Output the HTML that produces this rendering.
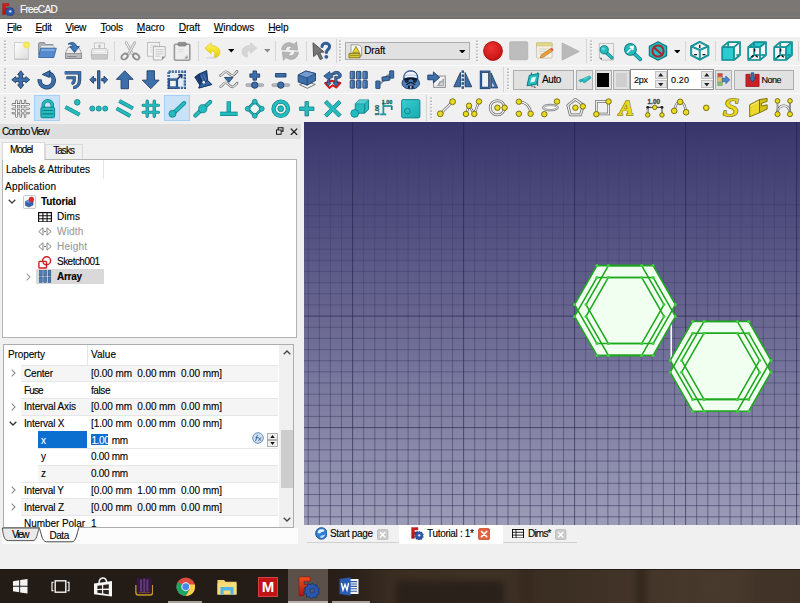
<!DOCTYPE html>
<html>
<head>
<meta charset="utf-8">
<title>FreeCAD</title>
<style>
html,body{margin:0;padding:0;}
body{width:800px;height:603px;overflow:hidden;position:relative;background:#f0f0f0;font-family:"Liberation Sans",sans-serif;font-size:10px;color:#000;}
.abs{position:absolute;}
.tx{font-size:9.2px;line-height:12px;white-space:nowrap;letter-spacing:-0.05px;-webkit-text-stroke:0.12px currentColor;}
#titlebar{left:0;top:0;width:800px;height:18.6px;background:linear-gradient(#7b7775 0,#7b7775 62%,#777573 66%,#777573 84%,#7c7a79 88%,#6d6a69 100%);}
#menubar{left:0;top:18.5px;width:800px;height:18.5px;background:#fff;}
#menubar span{position:absolute;top:3.6px;font-size:10.2px;line-height:12px;letter-spacing:-0.2px}
#tb{left:0;top:37px;width:800px;height:85px;background:#f0f0f0;}
.ic{position:absolute;overflow:visible}
.hl{position:absolute;background:#c9e2f8;border:1px solid #a6d0f5;box-sizing:border-box;}
.sep{position:absolute;width:1px;background:#d6d6d6;}
.hd{position:absolute;width:3px;background:radial-gradient(circle at 1px 1px,#9f9f9f 0.45px,rgba(160,160,160,0) 0.95px) 0 0/3px 3.25px repeat-y,radial-gradient(circle at 2px 2px,#fff 0.45px,rgba(255,255,255,0) 0.95px) 0 0/3px 3.25px repeat-y;}
.btn{position:absolute;box-sizing:border-box;border:1px solid #adadad;background:#e1e1e1;}
.spin{position:absolute;box-sizing:border-box;border:1px solid #8a8a8a;background:#fff;}
#combo{left:0;top:122px;width:304px;height:447px;background:#f0f0f0;}
#view3d{left:304.4px;top:122px;width:495.6px;height:403px;overflow:hidden;background:linear-gradient(#38356c 0%,#9c9cb8 100%);}
#mditabs{left:304px;top:525px;width:496px;height:44px;background:#f0f0f0;}
#taskbar{left:0;top:569px;width:800px;height:34px;background:#34281e;overflow:hidden;}
</style>
</head>
<body>
<div id="titlebar" class="abs">
<svg class="abs" style="left:1.5px;top:3.2px;width:13px;height:13px" viewBox="0 0 24 24"><defs><linearGradient id="fga" x1="0" y1="0" x2="0" y2="1"><stop offset="0" stop-color="#d42020"/><stop offset="1" stop-color="#b01414"/></linearGradient></defs><path d="M1 1 H13 V5.5 H6.4 V9 H11 V13.5 H6.4 V21 H1Z" fill="url(#fga)" stroke="#8e0f0f" stroke-width="0.6"/><g transform="translate(15.2 15.6)"><path d="M0 -8 L2 -5.8 L4.9 -6.4 L5.2 -3.4 L7.9 -2 L6.4 0.6 L7.6 3.4 L4.9 4.6 L4.3 7.6 L1.3 6.9 L-1 9 L-3 6.6 L-6 6.9 L-6.2 3.9 L-8.8 2.2 L-7.2 -0.4 L-8.2 -3.3 L-5.4 -4.4 L-4.6 -7.3 L-1.6 -6.5Z" fill="#2a56ad" stroke="#16336c" stroke-width="0.9"/><circle r="2.6" fill="#dfe6f5" stroke="#16336c" stroke-width="0.6"/></g></svg>
<div class="abs tx" style="left:20.00px;top:3.92px;font-size:10px;letter-spacing:-0.679px;color:#fff;">FreeCAD</div></div>
<div id="menubar" class="abs">
<div class="abs tx" style="left:7.00px;top:3.12px;font-size:10.2px;letter-spacing:-0.479px;"><u>F</u>ile</div><div class="abs tx" style="left:35.40px;top:3.12px;font-size:10.2px;letter-spacing:-0.359px;"><u>E</u>dit</div><div class="abs tx" style="left:65.60px;top:3.12px;font-size:10.2px;letter-spacing:-0.408px;"><u>V</u>iew</div><div class="abs tx" style="left:100.50px;top:3.12px;font-size:10.2px;letter-spacing:-0.328px;"><u>T</u>ools</div><div class="abs tx" style="left:136.80px;top:3.12px;font-size:10.2px;letter-spacing:-0.085px;"><u>M</u>acro</div><div class="abs tx" style="left:178.80px;top:3.12px;font-size:10.2px;letter-spacing:-0.226px;"><u>D</u>raft</div><div class="abs tx" style="left:213.80px;top:3.12px;font-size:10.2px;letter-spacing:-0.113px;"><u>W</u>indows</div><div class="abs tx" style="left:268.20px;top:3.12px;font-size:10.2px;letter-spacing:-0.193px;"><u>H</u>elp</div>
</div>
<div id="tb" class="abs">
<div class="abs" style="left:0;top:27.5px;width:800px;height:1px;background:#fbfbfb"></div>
<div class="abs" style="left:0;top:56px;width:800px;height:1px;background:#fbfbfb"></div>
<div class="hd" style="left:4px;top:3px;height:22px"></div>
<svg class="ic" style="left:10.6px;top:3.3px;width:20px;height:20px" viewBox="0 0 20 20" ><defs><linearGradient id="gnew" x1="0" y1="0" x2="1" y2="1"><stop offset="0" stop-color="#fff"/><stop offset="1" stop-color="#dcdcdc"/></linearGradient>
<radialGradient id="gstar"><stop offset="0" stop-color="#fff27a"/><stop offset=".6" stop-color="#f3e64a"/><stop offset="1" stop-color="#f3e64a" stop-opacity="0"/></radialGradient></defs>
<rect x="3.5" y="2.5" width="14" height="16.5" fill="url(#gnew)" stroke="#cdcdcd" stroke-width="0.9"/><path d="M3.5 19.4 H17.5" stroke="#bdbdbd" stroke-width="0.9"/>
<circle cx="15.5" cy="5" r="4.2" fill="url(#gstar)"/></svg>
<svg class="ic" style="left:36.8px;top:2.7px;width:20px;height:20px" viewBox="0 0 20 20" ><path d="M1.5 3.5 L1.5 15 L16 15 L16 4.5 L8.5 4.5 L7.5 2.5 L2.5 2.5 Z" fill="#a9adb3" stroke="#7f848c" stroke-width="0.8"/>
<path d="M4 5.5 L17 5.5 L16.5 15 L3 15Z" fill="#e8e8e8" stroke="#aaa" stroke-width="0.5"/>
<path d="M3.6 8.2 L19.3 8.2 L16.8 17.5 L1.6 17.5 Z" fill="#558bce" stroke="#3567a6" stroke-width="0.9"/>
<path d="M4.2 9 L18.3 9 L17.8 11 L3.8 11Z" fill="#7fb0e6" opacity=".8"/></svg>
<svg class="ic" style="left:62.8px;top:4.3px;width:20px;height:20px" viewBox="0 0 20 20" ><path d="M2.5 12 L5 6.5 L16 6.5 L18.5 12 L18.5 17.5 L2.5 17.5Z" fill="#ececed" stroke="#9a9ca0" stroke-width="0.9"/>
<rect x="2.5" y="12.5" width="16" height="5" fill="#b9bbbf" stroke="#85878b" stroke-width="0.8"/>
<rect x="4.5" y="15" width="9" height="1.2" fill="#8a8c90"/>
<path d="M5 3.2 C8 0.5 13 1.2 13.5 5.5 L16.3 5.5 L11.5 11.5 L6.8 5.5 L9.6 5.5 C9.5 3.2 7 2.6 5 3.2Z" fill="#3f78bb" stroke="#244f86" stroke-width="0.9"/></svg>
<svg class="ic" style="left:88.6px;top:3.8px;width:20px;height:20px" viewBox="0 0 20 20" ><rect x="5.5" y="2" width="10" height="7" fill="#f3f3f3" stroke="#bdbdbd" stroke-width="0.8"/>
<path d="M10.5 3.2 l2 2.2 h-1.2 v1.6 h-1.6 v-1.6 h-1.2z" fill="#bdbdbd"/>
<path d="M2.4 9.5 C2.4 8.3 3.4 7.6 4.6 7.6 L16.4 7.6 C17.6 7.6 18.6 8.3 18.6 9.5 L18.6 15 L2.4 15Z" fill="#ededed" stroke="#b4b4b4" stroke-width="0.8"/>
<rect x="2.4" y="13.6" width="16.2" height="4.6" rx="0.8" fill="#c9c9c9" stroke="#adadad" stroke-width="0.6"/>
<rect x="4.6" y="9.6" width="11.8" height="1.6" fill="#fafafa" stroke="#cfcfcf" stroke-width="0.4"/></svg>
<div class="sep" style="left:114px;top:4px;height:20px"></div>
<svg class="ic" style="left:120.0px;top:3.8px;width:20px;height:20px" viewBox="0 0 20 20" ><path d="M6.2 1.6 L12.6 13" stroke="#9c9c9c" stroke-width="2.6" stroke-linecap="round"/><path d="M6.2 1.6 L12.6 13" stroke="#ececec" stroke-width="1.4" stroke-linecap="round"/>
<path d="M14.8 1.6 L8.4 13" stroke="#9c9c9c" stroke-width="2.6" stroke-linecap="round"/><path d="M14.8 1.6 L8.4 13" stroke="#e2e2e2" stroke-width="1.4" stroke-linecap="round"/>
<ellipse cx="4.6" cy="15.6" rx="3.4" ry="2.5" fill="none" stroke="#8e8e8e" stroke-width="1.8" transform="rotate(-38 4.6 15.6)"/>
<ellipse cx="16.2" cy="15.6" rx="3.4" ry="2.5" fill="none" stroke="#8e8e8e" stroke-width="1.8" transform="rotate(38 16.2 15.6)"/></svg>
<svg class="ic" style="left:146.0px;top:3.8px;width:20px;height:20px" viewBox="0 0 20 20" ><rect x="1.6" y="1.6" width="12" height="13.6" fill="#f6f6f6" stroke="#b6b6b6" stroke-width="0.9"/>
<path d="M3.6 4.4h8M3.6 6.6h3M3.6 8.8h3M3.6 11h3" stroke="#d4d4d4" stroke-width="0.9"/>
<path d="M7.4 5.6 L19.2 5.6 L19.2 15.4 L15.8 19 L7.4 19Z" fill="#f4f4f4" stroke="#a9a9a9" stroke-width="0.9"/>
<path d="M9.4 8.6h8M9.4 10.8h8M9.4 13h8M9.4 15.2h5" stroke="#c6c6c6" stroke-width="1"/>
<path d="M19.2 15.4 L15.8 19 L15.8 15.4Z" fill="#8f8f8f"/></svg>
<svg class="ic" style="left:172.0px;top:3.8px;width:20px;height:20px" viewBox="0 0 20 20" ><rect x="2.4" y="3.2" width="15.4" height="16" rx="1" fill="#efefef" stroke="#999" stroke-width="1.6"/>
<path d="M15.6 14.4 L12.6 17.4 L15.6 17.4Z" fill="#8c8c8c"/><path d="M15.8 13.4 L11.8 17.6" stroke="#c4c4c4" stroke-width="0.8"/>
<rect x="6" y="1.4" width="8.2" height="3.6" rx="1.2" fill="#8f8f8f" stroke="#777" stroke-width="0.7"/>
<path d="M6 8.6h6M6 10.8h5" stroke="#dcdcdc" stroke-width="1"/></svg>
<div class="sep" style="left:197.5px;top:4px;height:20px"></div>
<svg class="ic" style="left:204.0px;top:4.7px;width:17px;height:17px" viewBox="0 0 20 20" ><defs><linearGradient id="gun" x1="0" y1="0" x2="0" y2="1"><stop offset="0" stop-color="#fbf286"/><stop offset=".5" stop-color="#f4e225"/><stop offset="1" stop-color="#e6cc1c"/></linearGradient></defs>
<ellipse cx="9" cy="18.6" rx="6.5" ry="1.3" fill="#dcdce6"/>
<path d="M1 7.4 L8.4 0.8 L8.4 4.2 C15 4 19.4 8 18.6 13.2 C18.2 16 16 17.8 13.2 18 L11.8 18 C12 16 12.6 15.4 12.6 13.6 C12.6 11.4 11.2 10.6 8.4 10.6 L8.4 14Z" fill="url(#gun)" stroke="#dcc41c" stroke-width="0.8" stroke-linejoin="round"/></svg>
<svg class="abs" style="left:227.7px;top:12.200000000000003px;width:6.6px;height:3.6px" viewBox="0 0 7 4"><path d="M0 0H7L3.5 4Z" fill="#000"/></svg>
<svg class="ic" style="left:241.2px;top:5.0px;width:16.5px;height:16.5px" viewBox="0 0 20 20" ><path d="M19 7.4 L11.6 0.8 L11.6 4.2 C5 4 0.6 8 1.4 13.2 C1.8 16 4 17.8 6.8 18 L8.2 18 C8 16 7.4 15.4 7.4 13.6 C7.4 11.4 8.8 10.6 11.6 10.6 L11.6 14Z" fill="#d6d6d6" stroke="#cbcbcb" stroke-width="0.8" stroke-linejoin="round"/></svg>
<svg class="abs" style="left:263.7px;top:12.200000000000003px;width:6.6px;height:3.6px" viewBox="0 0 7 4"><path d="M0 0H7L3.5 4Z" fill="#8a8a8a"/></svg>
<div class="sep" style="left:274.5px;top:4px;height:20px"></div>
<svg class="ic" style="left:280.0px;top:3.8px;width:20px;height:20px" viewBox="0 0 20 20" ><g transform="translate(10 10) scale(1.18) translate(-10 -10)"><path d="M3 9 C3 4.5 7 2.2 11 3.2 L13.5 4.4 L15.5 2.2 L16.5 9.2 L9.6 8.6 L11.7 6.4 C9 5.2 6.2 6.4 6.2 9Z" fill="#b5b5b5" stroke="#a2a2a2" stroke-width="0.6"/>
<path d="M17 11 C17 15.5 13 17.8 9 16.8 L6.5 15.6 L4.5 17.8 L3.5 10.8 L10.4 11.4 L8.3 13.6 C11 14.8 13.8 13.6 13.8 11Z" fill="#b5b5b5" stroke="#a2a2a2" stroke-width="0.6"/></g></svg>
<div class="sep" style="left:305.5px;top:4px;height:20px"></div>
<svg class="ic" style="left:311.0px;top:3.8px;width:20px;height:20px" viewBox="0 0 20 20" ><path d="M2 1.8 L2.6 15.6 L6.2 12.4 L9.2 18.6 L11.6 17.4 L8.6 11.4 L13.2 11Z" fill="#767676" stroke="#4a4a4a" stroke-width="0.9" stroke-linejoin="round"/>
<path d="M11 5.6 C11 1.2 18.6 1.2 18.6 5.6 C18.6 8.6 15.4 8.4 15.4 11.4" fill="none" stroke="#2f5f96" stroke-width="3" stroke-linecap="round"/>
<circle cx="15.3" cy="15.8" r="1.9" fill="#2f5f96"/></svg>
<div class="sep" style="left:335.5px;top:2px;height:24px"></div>
<div class="hd" style="left:339px;top:3px;height:22px"></div>
<div class="btn" style="left:344.5px;top:5px;width:125.5px;height:18px"></div>
<svg class="abs" style="left:348px;top:6.5px;width:15px;height:15px" viewBox="0 0 15 15"><path d="M3 0.8 L11 0.8 L13.6 3.4 L13.6 12 L3 12Z" fill="#f7f7f2" stroke="#8c8c8c" stroke-width="0.8"/><path d="M8 2.4 L11.4 8.6 L4.6 8.6Z" fill="#e8d42a" stroke="#7a6f00" stroke-width="0.7"/><path d="M1 9.6 L12 9.6 L12 13.8 L1 13.8Z" fill="#e3cf3a" stroke="#6f6500" stroke-width="0.8"/><path d="M2 11.6h9" stroke="#8b7f10" stroke-width="0.8"/></svg>
<div class="abs tx" style="left:364.30px;top:8.32px;font-size:10px;letter-spacing:-0.167px;">Draft</div>
<svg class="abs" style="left:459.2px;top:12.5px;width:6.6px;height:3.6px" viewBox="0 0 7 4"><path d="M0 0H7L3.5 4Z" fill="#000"/></svg>
<div class="hd" style="left:476px;top:3px;height:22px"></div>
<svg class="ic" style="left:482.5px;top:4.0px;width:20px;height:20px" viewBox="0 0 20 20" ><defs><radialGradient id="grec" cx=".4" cy=".35" r=".7"><stop offset="0" stop-color="#e33"/><stop offset="1" stop-color="#c41111"/></radialGradient></defs><circle cx="10" cy="10" r="9.4" fill="url(#grec)" stroke="#a70e0e" stroke-width="0.9"/></svg>
<svg class="ic" style="left:508.8px;top:4.0px;width:19.5px;height:19.5px" viewBox="0 0 20 20" ><rect x="0.8" y="0.8" width="18.4" height="18.4" rx="1.2" fill="#bdbdbd" stroke="#b0b0b0" stroke-width="0.8"/></svg>
<svg class="ic" style="left:535.0px;top:4.3px;width:19px;height:19px" viewBox="0 0 20 20" ><rect x="1.5" y="2" width="16.5" height="16" rx="1" fill="#f3f1e6" stroke="#c2bfae" stroke-width="0.9"/>
<rect x="1.5" y="2" width="16.5" height="3.2" fill="#e3d88a" stroke="#c7bb6a" stroke-width="0.6"/>
<path d="M4 8.5h9M4 11h7M4 13.5h5" stroke="#d0cdbf" stroke-width="1"/>
<path d="M6.5 14.8 L16.3 8 L18.3 10.6 L8.5 17.2 L5.6 17.6Z" fill="#e9a13a" stroke="#b86d1c" stroke-width="0.7"/>
<path d="M16.3 8 L18.3 10.6 L19.6 9.6 L17.8 7Z" fill="#d9534a"/></svg>
<svg class="ic" style="left:561.0px;top:4.5px;width:19px;height:19px" viewBox="0 0 20 20" ><path d="M1.2 1 L19.2 10 L1.2 19Z" fill="#b9b9b9" stroke="#acacac" stroke-width="0.8" stroke-linejoin="round"/></svg>
<div class="sep" style="left:585.5px;top:2px;height:24px"></div>
<div class="hd" style="left:589.5px;top:3px;height:22px"></div>
<svg class="ic" style="left:596.5px;top:4.5px;width:19px;height:19px" viewBox="0 0 20 20" ><path d="M2.5 1.5 L17.5 1.5 L17.5 19 L5 19 L2.5 16.5Z" fill="#eeeeee" stroke="#b9b9b9" stroke-width="0.9"/>
<path d="M2.5 16.5 L5 16.5 L5 19Z" fill="#555"/>
<path d="M9 10.5 L15.6 16.6" stroke="#0e7d83" stroke-width="3.6" stroke-linecap="round"/><path d="M9 10.5 L15.6 16.6" stroke="#25bcc0" stroke-width="2.2" stroke-linecap="round"/>
<circle cx="7.6" cy="8.2" r="4.3" fill="#25bcc0" stroke="#0e7d83" stroke-width="1"/><circle cx="6.6" cy="7.2" r="1.8" fill="#6fe0e0" opacity=".8"/></svg>
<svg class="ic" style="left:622.8px;top:4.8px;width:19.5px;height:19.5px" viewBox="0 0 20 20" ><path d="M11 11.5 L17.8 17.8" stroke="#0e7d83" stroke-width="3.8" stroke-linecap="round"/><path d="M11 11.5 L17.8 17.8" stroke="#25bcc0" stroke-width="2.4" stroke-linecap="round"/>
<circle cx="7.6" cy="7.6" r="6" fill="#25bcc0" stroke="#0e7d83" stroke-width="1.1"/>
<path d="M4.2 11 L9.8 5.4 M10.8 4.2 L7.2 5 L10 7.8Z" stroke="#fff" stroke-width="1.3" fill="#fff" stroke-linejoin="round"/></svg>
<svg class="ic" style="left:648.0px;top:4.0px;width:20px;height:20px" viewBox="0 0 20 20" ><path d="M10 0.8 L18.6 5.4 L18.6 14.6 L10 19.2 L1.4 14.6 L1.4 5.4Z" fill="#25bcc0" stroke="#0e7d83" stroke-width="1.3" stroke-linejoin="round"/>
<circle cx="10" cy="10" r="5.6" fill="none" stroke="#a8262c" stroke-width="2"/><path d="M6 6.4 L14 13.6" stroke="#a8262c" stroke-width="2"/></svg>
<svg class="abs" style="left:673.7px;top:12.700000000000003px;width:6.6px;height:3.6px" viewBox="0 0 7 4"><path d="M0 0H7L3.5 4Z" fill="#000"/></svg>
<div class="sep" style="left:684.5px;top:4px;height:20px"></div>
<svg class="ic" style="left:690.0px;top:4.0px;width:19.5px;height:19.5px" viewBox="0 0 20 20" ><path d="M10 1 L18.8 5.6 L18.8 14.6 L10 19.2 L1.2 14.6 L1.2 5.6Z" fill="#f6f6f6" stroke="#0e7d83" stroke-width="2" stroke-linejoin="round"/>
<path d="M10 1 L18.8 5.6 L18.8 14.6 L10 19.2 L1.2 14.6 L1.2 5.6Z" fill="none" stroke="#25bcc0" stroke-width="0.7" stroke-linejoin="round"/>
<path d="M1.2 5.6 L10 9.2 L18.8 5.6 M10 9.2 V19.2" fill="none" stroke="#0e7d83" stroke-width="1.9"/><path d="M1.2 5.6 L10 9.2 L18.8 5.6 M10 9.2 V19.2" fill="none" stroke="#25bcc0" stroke-width="0.7"/>
<path d="M10 7.2 v-3.4 M4.2 14 h3 M12.8 14 h3" stroke="#111" stroke-width="1.3"/></svg>
<div class="sep" style="left:714.5px;top:4px;height:20px"></div>
<svg class="ic" style="left:721.0px;top:4.0px;width:20px;height:20px" viewBox="0 0 20 20" ><path d="M1.2 6.2 L7.2 1.2 L19 1.2 L19 14 L13 19 L1.2 19Z" fill="#f6f6f6"/><rect x="1.2" y="6.2" width="11.8" height="12.8" fill="#2ccbd0"/><path d="M1.2 6.2 L7.2 1.2 L19 1.2 L19 14 L13 19 L1.2 19Z M1.2 6.2 L13 6.2 L13 19 M13 6.2 L19 1.2 M7.2 1.2 L7.2 6 M15.5 14 L19 14" fill="none" stroke="#0e7d83" stroke-width="1.7" stroke-linejoin="round"/><path d="M1.2 6.2 L7.2 1.2 L19 1.2 L19 14 L13 19 L1.2 19Z M1.2 6.2 L13 6.2 L13 19 M13 6.2 L19 1.2 M7.2 1.2 L7.2 6 M15.5 14 L19 14" fill="none" stroke="#25bcc0" stroke-width="0.5" stroke-linejoin="round"/></svg>
<svg class="ic" style="left:746.5px;top:4.0px;width:20px;height:20px" viewBox="0 0 20 20" ><path d="M1.2 6.2 L7.2 1.2 L19 1.2 L19 14 L13 19 L1.2 19Z" fill="#f6f6f6"/><path d="M1.2 6.2 L7.2 1.2 L19 1.2 L13 6.2Z" fill="#2ccbd0"/><path d="M1.2 6.2 L7.2 1.2 L19 1.2 L19 14 L13 19 L1.2 19Z M1.2 6.2 L13 6.2 L13 19 M13 6.2 L19 1.2 M7.2 1.2 L7.2 14 L1.2 19 M7.2 14 L19 14" fill="none" stroke="#0e7d83" stroke-width="1.7" stroke-linejoin="round"/><path d="M1.2 6.2 L7.2 1.2 L19 1.2 L19 14 L13 19 L1.2 19Z M1.2 6.2 L13 6.2 L13 19 M13 6.2 L19 1.2 M7.2 1.2 L7.2 14 L1.2 19 M7.2 14 L19 14" fill="none" stroke="#25bcc0" stroke-width="0.5" stroke-linejoin="round"/><path d="M7.6 10.6 v-2.8 M4.4 16 l2.2-1.8 M10.8 16.2 l-2.2-1.8" stroke="#111" stroke-width="1.4"/></svg>
<svg class="ic" style="left:772.5px;top:4.0px;width:20px;height:20px" viewBox="0 0 20 20" ><path d="M1.2 6.2 L7.2 1.2 L19 1.2 L19 14 L13 19 L1.2 19Z" fill="#f6f6f6"/><path d="M13 6.2 L19 1.2 L19 14 L13 19Z" fill="#2ccbd0"/><path d="M1.2 6.2 L7.2 1.2 L19 1.2 L19 14 L13 19 L1.2 19Z M1.2 6.2 L13 6.2 L13 19 M13 6.2 L19 1.2 M7.2 1.2 L7.2 14 L1.2 19 M7.2 14 L19 14" fill="none" stroke="#0e7d83" stroke-width="1.7" stroke-linejoin="round"/><path d="M1.2 6.2 L7.2 1.2 L19 1.2 L19 14 L13 19 L1.2 19Z M1.2 6.2 L13 6.2 L13 19 M13 6.2 L19 1.2 M7.2 1.2 L7.2 14 L1.2 19 M7.2 14 L19 14" fill="none" stroke="#25bcc0" stroke-width="0.5" stroke-linejoin="round"/><path d="M7.6 10.6 v-2.8 M4.4 16 l2.2-1.8 M10.8 16.2 l-2.2-1.8" stroke="#111" stroke-width="1.4"/></svg>
<div class="sep" style="left:797.5px;top:4px;height:20px"></div>
<div class="hd" style="left:4px;top:31px;height:23px"></div>
<svg class="ic" style="left:11.2px;top:32.5px;width:19.5px;height:19.5px" viewBox="0 0 20 20" ><path d="M10 0.8 L13.2 4.8 L11.8 4.8 L11.8 8.2 L15.2 8.2 L15.2 6.8 L19.2 10 L15.2 13.2 L15.2 11.8 L11.8 11.8 L11.8 15.2 L13.2 15.2 L10 19.2 L6.8 15.2 L8.2 15.2 L8.2 11.8 L4.8 11.8 L4.8 13.2 L0.8 10 L4.8 6.8 L4.8 8.2 L8.2 8.2 L8.2 4.8 L6.8 4.8Z" fill="#3d70aa" stroke="#1d3c66" stroke-width="0.9" stroke-linejoin="round" /></svg>
<svg class="ic" style="left:37.2px;top:32.5px;width:19.5px;height:19.5px" viewBox="0 0 20 20" ><path d="M2.8 9.6 A7.2 7.2 0 1 0 12.6 3.8" fill="none" stroke="#1d3c66" stroke-width="4.6" stroke-linecap="butt"/>
<path d="M2.8 9.6 A7.2 7.2 0 1 0 12.6 3.8" fill="none" stroke="#3d70aa" stroke-width="3" stroke-linecap="butt"/>
<path d="M13.4 0.6 L12.6 7.6 L5.4 4.6Z" fill="#3d70aa" stroke="#1d3c66" stroke-width="0.9" stroke-linejoin="round" /></svg>
<svg class="ic" style="left:63.2px;top:32.5px;width:19.5px;height:19.5px" viewBox="0 0 20 20" ><path d="M1.8 3 L17 3 L17 10 C17 15 14 18 10.5 18" fill="none" stroke="#1d3c66" stroke-width="3.4" stroke-linejoin="miter"/>
<path d="M1.8 3 L17 3 L17 10 C17 15 14 18 10.5 18" fill="none" stroke="#3d70aa" stroke-width="2.3"/>
<path d="M3.5 8 L11.5 8 L11.5 10.5 C11.5 12.5 10.5 13.5 8.8 13.8" fill="none" stroke="#1d3c66" stroke-width="3.2"/>
<path d="M3.5 8 L11.5 8 L11.5 10.5 C11.5 12.5 10.5 13.5 8.8 13.8" fill="none" stroke="#3d70aa" stroke-width="1.8"/></svg>
<svg class="ic" style="left:89.0px;top:32.5px;width:19.5px;height:19.5px" viewBox="0 0 20 20" ><path d="M8.8 0.8 L11.2 0.8 L11.2 19.2 L8.8 19.2Z" fill="#3d70aa" stroke="#1d3c66" stroke-width="0.9" stroke-linejoin="round" /><path d="M0.8 10 L4.6 6.2 L4.6 8.8 L7 8.8 L7 11.2 L4.6 11.2 L4.6 13.8Z" fill="#3d70aa" stroke="#1d3c66" stroke-width="0.9" stroke-linejoin="round" /><path d="M19.2 10 L15.4 6.2 L15.4 8.8 L13 8.8 L13 11.2 L15.4 11.2 L15.4 13.8Z" fill="#3d70aa" stroke="#1d3c66" stroke-width="0.9" stroke-linejoin="round" /></svg>
<svg class="ic" style="left:115.2px;top:32.5px;width:19.5px;height:19.5px" viewBox="0 0 20 20" ><path d="M10 0.8 L18.6 9.6 L13.8 9.6 L13.8 19.2 L6.2 19.2 L6.2 9.6 L1.4 9.6Z" fill="#3d70aa" stroke="#1d3c66" stroke-width="0.9" stroke-linejoin="round" /></svg>
<svg class="ic" style="left:141.2px;top:32.5px;width:19.5px;height:19.5px" viewBox="0 0 20 20" ><path d="M10 19.2 L18.6 10.4 L13.8 10.4 L13.8 0.8 L6.2 0.8 L6.2 10.4 L1.4 10.4Z" fill="#3d70aa" stroke="#1d3c66" stroke-width="0.9" stroke-linejoin="round" /></svg>
<svg class="ic" style="left:167.2px;top:32.5px;width:19.5px;height:19.5px" viewBox="0 0 20 20" ><rect x="1.7" y="1.7" width="16.6" height="16.6" fill="#e6ecf4" stroke="#1d3c66" stroke-width="2.4" stroke-dasharray="2.1 1.1"/>
<rect x="1.7" y="1.7" width="16.6" height="16.6" fill="none" stroke="#4b7cbb" stroke-width="1.3" stroke-dasharray="2.1 1.1"/>
<rect x="2" y="9.8" width="8.2" height="8.2" fill="#f6f6f6" stroke="#1d3c66" stroke-width="2.3"/><rect x="2" y="9.8" width="8.2" height="8.2" fill="none" stroke="#3d70aa" stroke-width="1"/>
<path d="M10.6 9.4 L14.6 5.4 M11.6 4.9 L15.1 4.9 L15.1 8.4" fill="none" stroke="#1d3c66" stroke-width="1.7"/></svg>
<svg class="ic" style="left:193.2px;top:32.5px;width:19.5px;height:19.5px" viewBox="0 0 20 20" ><path d="M5.9 4.2 L14.1 0.6 L15.1 10.8 L19.2 14.9 L5.9 18.5 L7.9 13.9Z" fill="#24508c" stroke="#132d52" stroke-width="0.9" stroke-linejoin="round"/>
<path d="M1.8 7.2 L5.9 4.2 L10 13.4 L6.9 15.4Z" fill="#1b3e70" stroke="#132d52" stroke-width="0.9" stroke-linejoin="round"/>
<path d="M8 5.4 L11.4 13 M10.6 4 L13.6 11.2" stroke="#4f7fbd" stroke-width="1.1"/>
<path d="M7.9 13.9 L15.1 10.8 L19.2 14.9 L5.9 18.5Z" fill="#3364a6" stroke="#132d52" stroke-width="0.7" stroke-linejoin="round"/>
<circle cx="11" cy="12.6" r="1.3" fill="#fff"/></svg>
<svg class="ic" style="left:219.2px;top:32.5px;width:19.5px;height:19.5px" viewBox="0 0 20 20" ><path d="M1.6 5.6 C3 5.6 5 1.6 7 1.6 C9 1.6 11.6 5.8 13.4 5.8 C15.2 5.8 17 3 18.6 1.4" fill="none" stroke="#555" stroke-width="2.4" stroke-linecap="round"/><path d="M1.6 5.6 C3 5.6 5 1.6 7 1.6 C9 1.6 11.6 5.8 13.4 5.8 C15.2 5.8 17 3 18.6 1.4" fill="none" stroke="#f4f4f4" stroke-width="1.2" stroke-linecap="round"/><path d="M1.6 17 C3 17 4.6 13 6.6 13 C9 13 11.4 17.4 13.6 17.4 C15.6 17.4 17 15 18.6 13.4" fill="none" stroke="#555" stroke-width="2.4" stroke-linecap="round"/><path d="M1.6 17 C3 17 4.6 13 6.6 13 C9 13 11.4 17.4 13.6 17.4 C15.6 17.4 17 15 18.6 13.4" fill="none" stroke="#f4f4f4" stroke-width="1.2" stroke-linecap="round"/><path d="M5.6 7.6 L14.4 7.6 L10 12.8Z" fill="#3d70aa" stroke="#1d3c66" stroke-width="0.9" stroke-linejoin="round" /></svg>
<svg class="ic" style="left:244.8px;top:32.5px;width:19.5px;height:19.5px" viewBox="0 0 20 20" ><path d="M8.2 1 L11.8 1 L11.8 4 L15 4 L15 7.4 L11.8 7.4 L11.8 10.4 L8.2 10.4 L8.2 7.4 L5 7.4 L5 4 L8.2 4Z" fill="#3d70aa" stroke="#1d3c66" stroke-width="0.9" stroke-linejoin="round" /><rect x="0.8" y="14" width="18.4" height="3" rx="1.5" fill="#b4b8be" stroke="#8d9197" stroke-width="0.6"/><circle cx="10" cy="15.5" r="3.3" fill="#3d70aa" stroke="#1d3c66" stroke-width="0.9"/></svg>
<svg class="ic" style="left:270.9px;top:32.5px;width:19.5px;height:19.5px" viewBox="0 0 20 20" ><path d="M4.6 3.6 L15.4 3.6 L15.4 7.2 L4.6 7.2Z" fill="#3d70aa" stroke="#1d3c66" stroke-width="0.9" stroke-linejoin="round" /><rect x="0.8" y="14" width="18.4" height="3" rx="1.5" fill="#b4b8be" stroke="#8d9197" stroke-width="0.6"/><circle cx="10" cy="15.5" r="3.3" fill="#3d70aa" stroke="#1d3c66" stroke-width="0.9"/></svg>
<svg class="ic" style="left:297.2px;top:32.5px;width:19.5px;height:19.5px" viewBox="0 0 20 20" ><path d="M2.5 15 L10.5 12.2 L18.8 14.8 L10.5 18.8Z" fill="#f0f0f0" stroke="#777" stroke-width="1"/>
<path d="M1.2 5.2 L9 1 L19 3.6 L19 10.8 L10.4 15.6 L1.2 12.2Z" fill="#3d70aa" stroke="#1d3c66" stroke-width="0.9" stroke-linejoin="round"/>
<path d="M1.2 5.2 L9 1 L19 3.6 L10.4 8Z" fill="#6f9bd0" stroke="#1d3c66" stroke-width="0.7" stroke-linejoin="round"/>
<path d="M10.4 8 L10.4 15.6" stroke="#1d3c66" stroke-width="0.8"/></svg>
<svg class="ic" style="left:323.2px;top:32.5px;width:19.5px;height:19.5px" viewBox="0 0 20 20" ><path d="M2.2 13.4 L9 11 L17.8 13.4 L13.5 18 L10 15.6 L6.6 18.4Z" fill="none" stroke="#d21818" stroke-width="2" stroke-linejoin="round"/>
<path d="M0.8 6.2 L7 1.6 L7 4 L10 3 L10 7.6 L7 8.6 L7 11Z" fill="#3d70aa" stroke="#1d3c66" stroke-width="0.8" stroke-linejoin="round"/>
<path d="M10.5 2.2 C13.5 0.5 18.5 1.5 18.8 5.4 C19 8 16.4 9.2 14.4 8.6 L14.4 13 L16.2 13 L13.2 16.6 L10.2 13 L12 13 L12 6.6 L15 6.8 C16.4 6 15.8 4 14 4 L10.5 4.8Z" fill="#3d70aa" stroke="#1d3c66" stroke-width="0.8" stroke-linejoin="round"/>
<path d="M6.6 9 L6.6 13.2 L8.4 13.2 L5.6 16.4 L2.8 13.2 L4.6 13.2 L4.6 10.4Z" fill="#3d70aa" stroke="#1d3c66" stroke-width="0.7" stroke-linejoin="round"/></svg>
<svg class="ic" style="left:349.2px;top:32.5px;width:19.5px;height:19.5px" viewBox="0 0 20 20" ><rect x="1.2" y="1.4" width="4.6" height="7.9" rx="0.6" fill="#3d70aa" stroke="#1d3c66" stroke-width="0.8"/><rect x="1.9" y="2.0" width="1.4" height="6.7" fill="#6f9bd0" opacity=".7"/><rect x="7.7" y="1.4" width="4.6" height="7.9" rx="0.6" fill="#3d70aa" stroke="#1d3c66" stroke-width="0.8"/><rect x="8.4" y="2.0" width="1.4" height="6.7" fill="#6f9bd0" opacity=".7"/><rect x="14.2" y="1.4" width="4.6" height="7.9" rx="0.6" fill="#3d70aa" stroke="#1d3c66" stroke-width="0.8"/><rect x="14.9" y="2.0" width="1.4" height="6.7" fill="#6f9bd0" opacity=".7"/><rect x="1.2" y="10.700000000000001" width="4.6" height="7.9" rx="0.6" fill="#3d70aa" stroke="#1d3c66" stroke-width="0.8"/><rect x="1.9" y="11.3" width="1.4" height="6.7" fill="#6f9bd0" opacity=".7"/><rect x="7.7" y="10.700000000000001" width="4.6" height="7.9" rx="0.6" fill="#3d70aa" stroke="#1d3c66" stroke-width="0.8"/><rect x="8.4" y="11.3" width="1.4" height="6.7" fill="#6f9bd0" opacity=".7"/><rect x="14.2" y="10.700000000000001" width="4.6" height="7.9" rx="0.6" fill="#3d70aa" stroke="#1d3c66" stroke-width="0.8"/><rect x="14.9" y="11.3" width="1.4" height="6.7" fill="#6f9bd0" opacity=".7"/></svg>
<svg class="ic" style="left:375.2px;top:32.5px;width:19.5px;height:19.5px" viewBox="0 0 20 20" ><path d="M3 15 C9 15 8 5 17 4" fill="none" stroke="#8d93a0" stroke-width="1.8"/>
<rect x="0.8" y="11.2" width="4.4" height="7.8" rx="0.5" fill="#3d70aa" stroke="#1d3c66" stroke-width="0.8"/>
<rect x="7.2" y="6.8" width="8" height="4.2" rx="0.5" fill="#3d70aa" stroke="#1d3c66" stroke-width="0.8" transform="rotate(-8 11 9)"/>
<rect x="15" y="0.8" width="4.2" height="7.6" rx="0.5" fill="#3d70aa" stroke="#1d3c66" stroke-width="0.8"/></svg>
<svg class="ic" style="left:401.1px;top:32.5px;width:19.5px;height:19.5px" viewBox="0 0 20 20" ><path d="M10 0.8 C15.5 0.8 17.4 4.6 17.2 9.4 C18.8 11.4 19.6 14 18.2 16 C16.2 19 13.5 19.3 10 19.3 C6.5 19.3 3.8 19 1.8 16 C0.4 14 1.2 11.4 2.8 9.4 C2.6 4.6 4.5 0.8 10 0.8Z" fill="#4d7fbb" stroke="#1d3c66" stroke-width="1"/>
<path d="M3.8 8.2 C3.6 3.4 6.4 1.9 10 1.9 C13.6 1.9 16.4 3.4 16.2 8.2 C12 7 8 7 3.8 8.2Z" fill="#f4f6fa"/>
<path d="M3.6 6 C7.6 4.8 12.4 4.8 16.4 6" fill="none" stroke="#9db7d6" stroke-width="0.8"/>
<path d="M3.2 8.6 C8 7.4 12 7.4 16.8 8.6 L16.6 10.6 L12 10.2 L10 9.6 L8 10.2 L3.4 10.6Z" fill="#0f1828"/>
<path d="M3.4 10.6 L8 10.2 L7.6 12.8 L4.6 13.2Z M16.6 10.6 L12 10.2 L12.4 12.8 L15.4 13.2Z" fill="#16243c"/>
<path d="M5.4 15.2 L10 12.6 L14.6 15.2" fill="none" stroke="#0f1828" stroke-width="1.3"/>
<path d="M7.2 16 h5.6 v3 h-5.6z" fill="#0f1828"/><path d="M9.1 16.4 h1.8 v2.4 h-1.8z" fill="#9bbbe2"/></svg>
<svg class="ic" style="left:426.8px;top:32.5px;width:19.5px;height:19.5px" viewBox="0 0 20 20" ><rect x="6.8" y="6.2" width="12" height="11.6" fill="#f3f3f3" stroke="#8a8a8a" stroke-width="1"/>
<path d="M10.5 16 L17 9 L17 16Z" fill="#cfd3d8" stroke="#7f8791" stroke-width="0.7"/>
<path d="M12.5 16 L12.5 12.2 L16.5 12.2" fill="none" stroke="#7f8791" stroke-width="0.7"/>
<path d="M0.8 5.2 L6.6 5.2 L6.6 2 L13 7.6 L6.6 13.2 L6.6 10 L0.8 10Z" fill="#3d70aa" stroke="#1d3c66" stroke-width="0.9" stroke-linejoin="round" /></svg>
<svg class="ic" style="left:452.9px;top:32.5px;width:19.5px;height:19.5px" viewBox="0 0 20 20" ><path d="M7.6 2.6 L7.6 17.2 L0.8 17.2Z" fill="#3d70aa" stroke="#1d3c66" stroke-width="0.9" stroke-linejoin="round" /><path d="M12.4 2.6 L12.4 17.2 L19.2 17.2Z" fill="#3d70aa" stroke="#1d3c66" stroke-width="0.9" stroke-linejoin="round" /><path d="M10 0.6 L10 19.6" stroke="#1d3c66" stroke-width="2.4" stroke-dasharray="2.6 1.4"/><path d="M10 0.6 L10 19.6" stroke="#3d70aa" stroke-width="1.1" stroke-dasharray="2.6 1.4"/></svg>
<svg class="ic" style="left:478.8px;top:32.5px;width:19.5px;height:19.5px" viewBox="0 0 20 20" ><rect x="2" y="1.8" width="8.6" height="16.6" fill="#eef1f6" stroke="#1d3c66" stroke-width="2.4"/><rect x="2" y="1.8" width="8.6" height="16.6" fill="none" stroke="#3d70aa" stroke-width="1"/>
<path d="M12.4 3 L12.4 18.4 L19.2 18.4Z" fill="#3d70aa" stroke="#1d3c66" stroke-width="0.9" stroke-linejoin="round"/>
<path d="M13.6 13 L13.6 17 L15.6 17Z" fill="#eef1f6"/></svg>
<div class="sep" style="left:503px;top:30px;height:25px"></div>
<div class="hd" style="left:507px;top:31px;height:23px"></div>
<div class="btn" style="left:513px;top:32.5px;width:61px;height:20px"></div>
<svg class="abs" style="left:525.5px;top:34.5px;width:14px;height:16px" viewBox="0 0 14 16"><path d="M5.4 0.6 L5.4 14 M11.6 0.6 L11.6 14" stroke="#0e7d83" stroke-width="1.1"/>
<path d="M3.4 3.2 L13 1.6 L10.6 12.2 L1 13.8Z" fill="#25bcc0" stroke="#0e7d83" stroke-width="1"/>
<path d="M5.6 5.6 L10 4.8 L8.6 9.8 L4.2 10.6Z" fill="#e8f8f8"/>
<path d="M6 13.6 L6 15.2 M8.2 13.8 L8.2 15.4 L9.6 15.4" stroke="#333" stroke-width="0.8" fill="none"/></svg>
<div class="abs tx" style="left:542.00px;top:36.71px;font-size:10px;letter-spacing:-0.423px;">Auto</div>
<div class="btn" style="left:576px;top:32.5px;width:16.5px;height:20px"></div>
<svg class="abs" style="left:577.5px;top:37px;width:14px;height:11px" viewBox="0 2 20 12"><path d="M1.2 9.4 C3.2 7.4 5.6 7.2 7.2 8.4 L4.6 11.8 C3.4 11.6 2 10.8 1.2 9.4Z" fill="#25bcc0" stroke="#0e7d83" stroke-width="0.6"/>
<path d="M6.4 7.4 L15.6 3 C17.6 3 18.8 4.6 18.4 6.2 L9.6 12.6 C7 12.8 5.4 10.2 6.4 7.4Z" fill="#25bcc0" stroke="#0e7d83" stroke-width="0.7"/>
<path d="M8.2 7.6 L15.4 4.2" stroke="#6fe0e0" stroke-width="1.1"/></svg>
<div class="btn" style="left:594.5px;top:32.5px;width:17px;height:20px"></div><div class="abs" style="left:597px;top:35.5px;width:12px;height:14px;background:#000"></div>
<div class="btn" style="left:613px;top:32.5px;width:16.5px;height:20px"></div><div class="abs" style="left:615.5px;top:35.5px;width:11.5px;height:14px;background:#cfcfcf"></div>
<div class="spin" style="left:630px;top:32px;width:37.5px;height:20.5px"></div><div class="abs tx" style="left:634.00px;top:36.70px;font-size:9px;letter-spacing:-0.255px;">2px</div><div class="abs" style="left:655.0px;top:33.5px;width:11.5px;height:8.5px;background:#e6e6e6;border:1px solid #c3c3c3;box-sizing:border-box"></div><div class="abs" style="left:655.0px;top:42.5px;width:11.5px;height:8.5px;background:#e6e6e6;border:1px solid #c3c3c3;box-sizing:border-box"></div><svg class="abs" style="left:658.0px;top:36px;width:5.5px;height:3.5px" viewBox="0 0 6 4"><path d="M0 4H6L3 0Z" fill="#222"/></svg><svg class="abs" style="left:658.0px;top:45.5px;width:5.5px;height:3.5px" viewBox="0 0 6 4"><path d="M0 0H6L3 4Z" fill="#222"/></svg>
<div class="spin" style="left:667px;top:32px;width:46.5px;height:20.5px"></div><div class="abs tx" style="left:671.00px;top:36.70px;font-size:9px;letter-spacing:0.162px;">0.20</div><div class="abs" style="left:701.0px;top:33.5px;width:11.5px;height:8.5px;background:#e6e6e6;border:1px solid #c3c3c3;box-sizing:border-box"></div><div class="abs" style="left:701.0px;top:42.5px;width:11.5px;height:8.5px;background:#e6e6e6;border:1px solid #c3c3c3;box-sizing:border-box"></div><svg class="abs" style="left:704.0px;top:36px;width:5.5px;height:3.5px" viewBox="0 0 6 4"><path d="M0 4H6L3 0Z" fill="#222"/></svg><svg class="abs" style="left:704.0px;top:45.5px;width:5.5px;height:3.5px" viewBox="0 0 6 4"><path d="M0 0H6L3 4Z" fill="#222"/></svg>
<div class="btn" style="left:715px;top:32.5px;width:16.5px;height:20px"></div>
<svg class="abs" style="left:716.5px;top:35px;width:14px;height:15px" viewBox="0 0 19 19"><rect x="1" y="1" width="6.6" height="5" fill="#d9453b" stroke="#8d8d8d" stroke-width="0.6"/><rect x="1" y="7" width="6.6" height="5" fill="#e8c84a" stroke="#8d8d8d" stroke-width="0.6"/><rect x="1" y="13" width="6.6" height="5" fill="#7fc15a" stroke="#8d8d8d" stroke-width="0.6"/>
<path d="M7 7.6 L12 7.6 L12 4.6 L17.6 10 L12 15.4 L12 12.4 L7 12.4Z" fill="#4b86c8" stroke="#2a5a96" stroke-width="0.8" stroke-linejoin="round"/></svg>
<div class="btn" style="left:733.5px;top:32.5px;width:60.5px;height:20px"></div>
<svg class="abs" style="left:745px;top:35px;width:15px;height:15px" viewBox="0 0 16 16"><path d="M1 2.5 L5.5 2.5 L5.5 9 L10.5 9 L10.5 2.5 L15 2.5 L15 15.5 L1 15.5Z" fill="#cf1f26" stroke="#8d1116" stroke-width="0.8"/>
<path d="M6.6 0.8 L9.4 0.8 L9.4 6 L11.4 6 L8 10.4 L4.6 6 L6.6 6Z" fill="#3d70aa" stroke="#1d3c66" stroke-width="0.7"/></svg>
<div class="abs tx" style="left:761.60px;top:36.70px;font-size:9px;letter-spacing:-0.505px;">None</div>
<div class="hd" style="left:4px;top:60px;height:23px"></div>
<div class="hl" style="left:34px;top:58px;width:26px;height:25.5px"></div>
<div class="hl" style="left:164px;top:58px;width:26px;height:25.5px"></div>
<svg class="ic" style="left:11.2px;top:61.7px;width:19.5px;height:19.5px" viewBox="0 0 20 20" ><path d="M1.8 5.6 H18.2 M1.8 10 H18.2 M1.8 14.4 H18.2 M5.6 1.8 V18.2 M10 1.8 V18.2 M14.4 1.8 V18.2" fill="none" stroke="#555" stroke-width="2.3" stroke-linecap="round"/><path d="M1.8 5.6 H18.2 M1.8 10 H18.2 M1.8 14.4 H18.2 M5.6 1.8 V18.2 M10 1.8 V18.2 M14.4 1.8 V18.2" fill="none" stroke="#f4f4f4" stroke-width="1.0999999999999999" stroke-linecap="round"/></svg>
<svg class="ic" style="left:37.6px;top:61.7px;width:19.5px;height:19.5px" viewBox="0 0 20 20" ><path d="M5.4 9 L5.4 6.4 C5.4 0.4 14.6 0.4 14.6 6.4 L14.6 9" fill="none" stroke="#0e7d83" stroke-width="3.6"/><path d="M5.4 9 L5.4 6.4 C5.4 0.4 14.6 0.4 14.6 6.4 L14.6 9" fill="none" stroke="#25bcc0" stroke-width="2.2"/>
<rect x="3" y="8.4" width="14" height="10.8" rx="1.4" fill="#25bcc0" stroke="#0e7d83" stroke-width="1"/>
<path d="M4.6 11.8 H15.4 M4.6 15.2 H15.4" stroke="#0e7d83" stroke-width="1.2"/></svg>
<svg class="ic" style="left:62.8px;top:61.7px;width:19.5px;height:19.5px" viewBox="0 0 20 20" ><path d="M2.4 8.2 L17 16.2" fill="none" stroke="#0e7d83" stroke-width="4.199999999999999" stroke-linecap="butt"/><path d="M2.4 8.2 L17 16.2" fill="none" stroke="#25bcc0" stroke-width="2.8" stroke-linecap="butt"/><circle cx="14.6" cy="3.4" r="2.9" fill="#25bcc0" stroke="#0e7d83" stroke-width="0.8"/></svg>
<svg class="ic" style="left:89.2px;top:61.7px;width:19.5px;height:19.5px" viewBox="0 0 20 20" ><circle cx="3.4" cy="9.8" r="2.6" fill="#25bcc0" stroke="#0e7d83" stroke-width="0.8"/><circle cx="10" cy="9.8" r="2.6" fill="#25bcc0" stroke="#0e7d83" stroke-width="0.8"/><circle cx="16.6" cy="9.8" r="2.6" fill="#25bcc0" stroke="#0e7d83" stroke-width="0.8"/></svg>
<svg class="ic" style="left:115.2px;top:61.7px;width:19.5px;height:19.5px" viewBox="0 0 20 20" ><path d="M4.4 2 L18.4 9.6" fill="none" stroke="#0e7d83" stroke-width="4.0" stroke-linecap="butt"/><path d="M4.4 2 L18.4 9.6" fill="none" stroke="#25bcc0" stroke-width="2.6" stroke-linecap="butt"/><path d="M1.6 9.6 L15.6 17.4" fill="none" stroke="#0e7d83" stroke-width="4.0" stroke-linecap="butt"/><path d="M1.6 9.6 L15.6 17.4" fill="none" stroke="#25bcc0" stroke-width="2.6" stroke-linecap="butt"/></svg>
<svg class="ic" style="left:141.2px;top:61.7px;width:19.5px;height:19.5px" viewBox="0 0 20 20" ><path d="M2.2 6.4 H17.8 M2.2 13.6 H17.8 M6.4 2.2 V17.8 M13.6 2.2 V17.8" fill="none" stroke="#0e7d83" stroke-width="3.3" stroke-linecap="round"/><path d="M2.2 6.4 H17.8 M2.2 13.6 H17.8 M6.4 2.2 V17.8 M13.6 2.2 V17.8" fill="none" stroke="#25bcc0" stroke-width="1.9" stroke-linecap="round"/></svg>
<svg class="ic" style="left:167.7px;top:61.7px;width:19.5px;height:19.5px" viewBox="0 0 20 20" ><path d="M5 15.2 L16.6 4.2" fill="none" stroke="#0e7d83" stroke-width="4.199999999999999" stroke-linecap="round"/><path d="M5 15.2 L16.6 4.2" fill="none" stroke="#25bcc0" stroke-width="2.8" stroke-linecap="round"/><circle cx="4.6" cy="15.2" r="3.6" fill="#25bcc0" stroke="#0e7d83" stroke-width="0.8"/></svg>
<svg class="ic" style="left:193.2px;top:61.7px;width:19.5px;height:19.5px" viewBox="0 0 20 20" ><path d="M2.4 17 L17.6 3" fill="none" stroke="#0e7d83" stroke-width="4.199999999999999" stroke-linecap="round"/><path d="M2.4 17 L17.6 3" fill="none" stroke="#25bcc0" stroke-width="2.8" stroke-linecap="round"/><circle cx="10" cy="10" r="4.2" fill="#25bcc0" stroke="#0e7d83" stroke-width="0.8"/></svg>
<svg class="ic" style="left:219.1px;top:61.7px;width:19.5px;height:19.5px" viewBox="0 0 20 20" ><path d="M10 2.4 V15" fill="none" stroke="#0e7d83" stroke-width="4.4" stroke-linecap="butt"/><path d="M10 2.4 V15" fill="none" stroke="#25bcc0" stroke-width="3" stroke-linecap="butt"/><path d="M1 15.2 H19" fill="none" stroke="#0e7d83" stroke-width="4.4" stroke-linecap="butt"/><path d="M1 15.2 H19" fill="none" stroke="#25bcc0" stroke-width="3" stroke-linecap="butt"/></svg>
<svg class="ic" style="left:244.7px;top:61.7px;width:19.5px;height:19.5px" viewBox="0 0 20 20" ><path d="M10 2.6 L17.4 10 L10 17.4 L2.6 10Z" fill="none" stroke="#0e7d83" stroke-width="2.6"/><path d="M10 2.6 L17.4 10 L10 17.4 L2.6 10Z" fill="none" stroke="#25bcc0" stroke-width="1.2"/><circle cx="10" cy="2.8" r="2.5" fill="#25bcc0" stroke="#0e7d83" stroke-width="0.8"/><circle cx="17.2" cy="10" r="2.5" fill="#25bcc0" stroke="#0e7d83" stroke-width="0.8"/><circle cx="10" cy="17.2" r="2.5" fill="#25bcc0" stroke="#0e7d83" stroke-width="0.8"/><circle cx="2.8" cy="10" r="2.5" fill="#25bcc0" stroke="#0e7d83" stroke-width="0.8"/></svg>
<svg class="ic" style="left:270.9px;top:61.7px;width:19.5px;height:19.5px" viewBox="0 0 20 20" ><circle cx="10" cy="10" r="7.4" fill="none" stroke="#0e7d83" stroke-width="4.4"/><circle cx="10" cy="10" r="7.4" fill="none" stroke="#25bcc0" stroke-width="3"/><circle cx="10" cy="10" r="3" fill="#25bcc0" stroke="#0e7d83" stroke-width="0.8"/></svg>
<svg class="ic" style="left:297.1px;top:61.7px;width:19.5px;height:19.5px" viewBox="0 0 20 20" ><path d="M8.2 2.6 h3.6 v5.6 h5.6 v3.6 h-5.6 v5.6 h-3.6 v-5.6 h-5.6 v-3.6 h5.6z" fill="#25bcc0" stroke="#0e7d83" stroke-width="0.8" stroke-linejoin="round"/></svg>
<svg class="ic" style="left:323.2px;top:61.7px;width:19.5px;height:19.5px" viewBox="0 0 20 20" ><path d="M1.4 4 L4 1.4 L10 7.4 L16 1.4 L18.6 4 L12.6 10 L18.6 16 L16 18.6 L10 12.6 L4 18.6 L1.4 16 L7.4 10Z" fill="#25bcc0" stroke="#0e7d83" stroke-width="0.8" stroke-linejoin="round"/></svg>
<svg class="ic" style="left:349.8px;top:61.7px;width:19.5px;height:19.5px" viewBox="0 0 20 20" ><path d="M5.4 4.8 L9.2 1 L19 1 L19 10.6 L15 14.6 L5.4 14.6Z" fill="#25bcc0" stroke="#0e7d83" stroke-width="0.9" stroke-linejoin="round"/>
<path d="M5.4 4.8 L15 4.8 L19 1 M15 4.8 L15 14.6" fill="none" stroke="#0e7d83" stroke-width="0.9"/>
<path d="M5.4 4.8 L9.2 1 L19 1 L15 4.8Z" fill="#6fe0e0" opacity=".6"/><circle cx="4.8" cy="14.8" r="4" fill="#25bcc0" stroke="#0e7d83" stroke-width="0.8"/></svg>
<svg class="ic" style="left:375.2px;top:61.7px;width:19.5px;height:19.5px" viewBox="0 0 20 20" ><path d="M8.6 3.4 V16.4 M5.4 15.8 H11.4 M8.6 7.2 H17.6 M17.2 7.2 V11.4" fill="none" stroke="#0e7d83" stroke-width="1.7"/><path d="M8.6 3.4 V16.4 M5.4 15.8 H11.4 M8.6 7.2 H17.6" fill="none" stroke="#25bcc0" stroke-width="0.6"/>
<text x="6.8" y="4.8" font-family="Liberation Sans" font-weight="bold" font-size="5.6" fill="#155f62" stroke="#155f62" stroke-width="0.3">1.00</text>
<text transform="translate(4.6 17) rotate(-90)" font-family="Liberation Sans" font-weight="bold" font-size="5.6" fill="#155f62" stroke="#155f62" stroke-width="0.3">1.00</text></svg>
<svg class="ic" style="left:401.1px;top:61.7px;width:19.5px;height:19.5px" viewBox="0 0 20 20" ><defs><linearGradient id="gwp" x1="0" y1="0" x2="1" y2="1"><stop offset="0" stop-color="#37cfd2"/><stop offset="1" stop-color="#1aa9ae"/></linearGradient></defs>
<rect x="0.6" y="0.6" width="18.8" height="18.8" rx="1.6" fill="url(#gwp)" stroke="#0e7d83" stroke-width="0.9"/>
<circle cx="6.6" cy="12.4" r="2.9" fill="#29bcc0" stroke="#0e7d83" stroke-width="0.9"/></svg>
<div class="sep" style="left:425.5px;top:58px;height:26px"></div>
<div class="hd" style="left:430px;top:60px;height:23px"></div>
<svg class="ic" style="left:437.1px;top:61.2px;width:19.5px;height:19.5px" viewBox="0 0 20 20" ><path d="M3.4 16.2 L16 3.8" fill="none" stroke="#555" stroke-width="2.6" stroke-linecap="round"/><path d="M3.4 16.2 L16 3.8" fill="none" stroke="#f4f4f4" stroke-width="1.4000000000000001" stroke-linecap="round"/><circle cx="3.4" cy="16.2" r="3" fill="#e9da22" stroke="#6e6500" stroke-width="0.9"/><circle cx="16" cy="3.8" r="3" fill="#e9da22" stroke="#6e6500" stroke-width="0.9"/></svg>
<svg class="ic" style="left:462.9px;top:61.2px;width:19.5px;height:19.5px" viewBox="0 0 20 20" ><path d="M3 16.4 L6.2 8 L11.6 16.4 L16.4 3.6" fill="none" stroke="#555" stroke-width="2.4" stroke-linecap="round"/><path d="M3 16.4 L6.2 8 L11.6 16.4 L16.4 3.6" fill="none" stroke="#f4f4f4" stroke-width="1.2" stroke-linecap="round"/><circle cx="3" cy="16.4" r="2.8" fill="#e9da22" stroke="#6e6500" stroke-width="0.9"/><circle cx="6.2" cy="8" r="2.8" fill="#e9da22" stroke="#6e6500" stroke-width="0.9"/><circle cx="11.6" cy="16.4" r="2.8" fill="#e9da22" stroke="#6e6500" stroke-width="0.9"/><circle cx="16.4" cy="3.6" r="2.8" fill="#e9da22" stroke="#6e6500" stroke-width="0.9"/></svg>
<svg class="ic" style="left:489.2px;top:61.2px;width:19.5px;height:19.5px" viewBox="0 0 20 20" ><circle cx="8.6" cy="10" r="7.4" fill="none" stroke="#666" stroke-width="2.8"/><circle cx="8.6" cy="10" r="7.4" fill="none" stroke="#f2f2f2" stroke-width="1.3"/><circle cx="8.6" cy="10" r="2.8" fill="#e9da22" stroke="#6e6500" stroke-width="0.9"/><circle cx="16" cy="10" r="2.8" fill="#e9da22" stroke="#6e6500" stroke-width="0.9"/></svg>
<svg class="ic" style="left:514.9px;top:61.2px;width:19.5px;height:19.5px" viewBox="0 0 20 20" ><path d="M4 3.8 C11 3.8 16 9 16 16.2" fill="none" stroke="#555" stroke-width="2.6" stroke-linecap="round"/><path d="M4 3.8 C11 3.8 16 9 16 16.2" fill="none" stroke="#f4f4f4" stroke-width="1.4000000000000001" stroke-linecap="round"/><circle cx="4" cy="3.8" r="2.8" fill="#e9da22" stroke="#6e6500" stroke-width="0.9"/><circle cx="4" cy="16.2" r="2.8" fill="#e9da22" stroke="#6e6500" stroke-width="0.9"/><circle cx="16" cy="16.2" r="2.8" fill="#e9da22" stroke="#6e6500" stroke-width="0.9"/></svg>
<svg class="ic" style="left:540.9px;top:61.2px;width:19.5px;height:19.5px" viewBox="0 0 20 20" ><ellipse cx="9.6" cy="9.8" rx="8.2" ry="3.4" fill="#f2f2f2" stroke="#666" stroke-width="0.8"/><ellipse cx="9.6" cy="9.8" rx="6.4" ry="2" fill="#f7f7f7" stroke="#777" stroke-width="0.7"/><circle cx="16.4" cy="3.6" r="2.8" fill="#e9da22" stroke="#6e6500" stroke-width="0.9"/><circle cx="3.4" cy="16.6" r="2.8" fill="#e9da22" stroke="#6e6500" stroke-width="0.9"/></svg>
<svg class="ic" style="left:567.2px;top:61.2px;width:19.5px;height:19.5px" viewBox="0 0 20 20" ><path d="M8.6 1.4 L17 7.4 L13.8 17.4 L3.4 17.4 L0.8 7.4Z" fill="none" stroke="#666" stroke-width="2.8" stroke-linejoin="round"/><path d="M8.6 1.4 L17 7.4 L13.8 17.4 L3.4 17.4 L0.8 7.4Z" fill="none" stroke="#f2f2f2" stroke-width="1.3" stroke-linejoin="round"/><circle cx="8.6" cy="10" r="2.8" fill="#e9da22" stroke="#6e6500" stroke-width="0.9"/><circle cx="16.2" cy="8.6" r="2.8" fill="#e9da22" stroke="#6e6500" stroke-width="0.9"/></svg>
<svg class="ic" style="left:592.6px;top:61.2px;width:19.5px;height:19.5px" viewBox="0 0 20 20" ><rect x="3.4" y="3.6" width="12.6" height="12.8" fill="none" stroke="#666" stroke-width="2.6"/><rect x="3.4" y="3.6" width="12.6" height="12.8" fill="none" stroke="#f2f2f2" stroke-width="1.2"/><circle cx="16" cy="3.6" r="2.8" fill="#e9da22" stroke="#6e6500" stroke-width="0.9"/><circle cx="3.4" cy="16.6" r="2.8" fill="#e9da22" stroke="#6e6500" stroke-width="0.9"/></svg>
<svg class="ic" style="left:619.2px;top:61.2px;width:19.5px;height:19.5px" viewBox="0 0 20 20" ><text x="0.2" y="17.6" font-family="Liberation Serif" font-style="italic" font-weight="bold" font-size="22" fill="#6e6500" stroke="#6e6500" stroke-width="1.5">A</text><text x="0.2" y="17.6" font-family="Liberation Serif" font-style="italic" font-weight="bold" font-size="22" fill="#e9da22" stroke="#e9da22" stroke-width="0.5">A</text></svg>
<svg class="ic" style="left:644.9px;top:61.2px;width:19.5px;height:19.5px" viewBox="0 0 20 20" ><path d="M2.8 17 V9.6 M17.4 17 V9.6" fill="none" stroke="#555" stroke-width="2" stroke-linecap="round"/><path d="M2.8 17 V9.6 M17.4 17 V9.6" fill="none" stroke="#f4f4f4" stroke-width="0.8" stroke-linecap="round"/><path d="M2.8 9.6 H17.4" fill="none" stroke="#444" stroke-width="1.2"/><circle cx="2.8" cy="9.6" r="1.5" fill="#222"/><circle cx="17.4" cy="9.6" r="1.5" fill="#222"/>
<text x="2.6" y="6.6" font-family="Liberation Sans" font-weight="bold" font-size="6.6" fill="#444" stroke="#444" stroke-width="0.3">1.00</text><circle cx="2.8" cy="17.4" r="2.3" fill="#e9da22" stroke="#6e6500" stroke-width="0.9"/><circle cx="17.4" cy="17.4" r="2.3" fill="#e9da22" stroke="#6e6500" stroke-width="0.9"/><circle cx="10" cy="9.6" r="2.3" fill="#e9da22" stroke="#6e6500" stroke-width="0.9"/></svg>
<svg class="ic" style="left:670.9px;top:61.2px;width:19.5px;height:19.5px" viewBox="0 0 20 20" ><path d="M3.4 13 C4.4 7 6.6 4 9.4 4 C12.6 4 14.6 8 15.4 14.4" fill="none" stroke="#555" stroke-width="2.4" stroke-linecap="round"/><path d="M3.4 13 C4.4 7 6.6 4 9.4 4 C12.6 4 14.6 8 15.4 14.4" fill="none" stroke="#f4f4f4" stroke-width="1.2" stroke-linecap="round"/><circle cx="9.4" cy="3.9" r="2.9" fill="#e9da22" stroke="#6e6500" stroke-width="0.9"/><circle cx="3.3" cy="13.2" r="2.9" fill="#e9da22" stroke="#6e6500" stroke-width="0.9"/><circle cx="15.5" cy="14.6" r="2.9" fill="#e9da22" stroke="#6e6500" stroke-width="0.9"/></svg>
<svg class="ic" style="left:696.9px;top:61.2px;width:19.5px;height:19.5px" viewBox="0 0 20 20" ><circle cx="9.5" cy="10.1" r="2.9" fill="#e9da22" stroke="#6e6500" stroke-width="0.9"/></svg>
<svg class="ic" style="left:723.2px;top:61.2px;width:19.5px;height:19.5px" viewBox="0 0 20 20" ><g transform="translate(0.6 0) scale(1.22 1)"><text x="0" y="18" font-family="Liberation Serif" font-style="italic" font-size="25" fill="#6e6500" stroke="#6e6500" stroke-width="1.7">S</text><text x="0" y="18" font-family="Liberation Serif" font-style="italic" font-size="25" fill="#e9da22" stroke="#e9da22" stroke-width="0.5">S</text></g></svg>
<svg class="ic" style="left:749.0px;top:61.2px;width:19.5px;height:19.5px" viewBox="0 0 20 20" ><path d="M0.7 6.9 L10.8 1.6 L10.8 15.1 L0.7 19.3Z" fill="#ecd92a" stroke="#6e6500" stroke-width="0.9" stroke-linejoin="round"/>
<path d="M10.8 1.6 L18.6 0.4 L18.6 3.4 L12.7 5.6 L12.7 8.2 L18.6 7 L18.6 11.4 L10.8 15.1Z" fill="#d6c214" stroke="#6e6500" stroke-width="0.9" stroke-linejoin="round"/>
<path d="M1.6 8 L10 3.6" stroke="#f7ee8a" stroke-width="0.9"/></svg>
<svg class="ic" style="left:773.9px;top:61.2px;width:19.5px;height:19.5px" viewBox="0 0 20 20" ><path d="M3.6 15.6 C3.6 5.4 16.4 5.4 16.4 15.6" fill="none" stroke="#555" stroke-width="2.6" stroke-linecap="round"/><path d="M3.6 15.6 C3.6 5.4 16.4 5.4 16.4 15.6" fill="none" stroke="#f4f4f4" stroke-width="1.4000000000000001" stroke-linecap="round"/><path d="M3.6 3.4 V15.6 M16.4 3.4 V15.6" stroke="#555" stroke-width="1.6"/><path d="M3.6 3.4 V15.6 M16.4 3.4 V15.6" stroke="#eee" stroke-width="0.5"/><circle cx="3.6" cy="3" r="2.4" fill="#e9da22" stroke="#6e6500" stroke-width="0.9"/><circle cx="16.4" cy="3" r="2.4" fill="#e9da22" stroke="#6e6500" stroke-width="0.9"/><circle cx="3.6" cy="16.6" r="2.6" fill="#e9da22" stroke="#6e6500" stroke-width="0.9"/><circle cx="16.4" cy="16.6" r="2.6" fill="#e9da22" stroke="#6e6500" stroke-width="0.9"/></svg>
</div>
<div id="combo" class="abs">
<div class="abs" style="left:0;top:1.5px;width:300.5px;height:15px;background:#dedede"></div>
<div class="abs tx" style="left:2.00px;top:3.61px;font-size:10px;letter-spacing:-0.990px;">Combo View</div>
<svg class="abs" style="left:276px;top:5px;width:7.6px;height:7.8px" viewBox="0 0 9 9"><path d="M2.6 0.7 H8.3 V5 H2.6Z M0.7 3.4 H6 V8.3 H0.7Z" fill="none" stroke="#111" stroke-width="1.3"/><rect x="1.2" y="4" width="4.2" height="3.6" fill="#dedede"/></svg>
<svg class="abs" style="left:289.5px;top:5.5px;width:8px;height:7.5px" viewBox="0 0 8 8"><path d="M0.6 0.6 L7.4 7.4 M7.4 0.6 L0.6 7.4" stroke="#111" stroke-width="1.3"/></svg>
<div class="abs" style="left:45px;top:21.5px;width:38px;height:15px;background:#f0f0f0;border:1px solid #d9d9d9;border-bottom:none;box-sizing:border-box"></div>
<div class="abs tx" style="left:53.20px;top:22.92px;font-size:10px;letter-spacing:-0.940px;">Tasks</div>
<div class="abs" style="left:2px;top:36.5px;width:295px;height:179.5px;background:#fff;border:1px solid #b4b4b4;box-sizing:border-box"></div>
<div class="abs" style="left:2px;top:19.5px;width:42.5px;height:18px;background:#fff;border:1px solid #d9d9d9;border-bottom:none;box-sizing:border-box"></div>
<div class="abs tx" style="left:10.00px;top:22.42px;font-size:10px;letter-spacing:-1.009px;">Model</div>
<div class="abs" style="left:103px;top:38px;width:1px;height:18.5px;background:#e5e5e5"></div>
<div class="abs tx" style="left:6.00px;top:42.12px;font-size:10px;letter-spacing:0.034px;">Labels &amp; Attributes</div>
<div class="abs tx" style="left:5.00px;top:58.72px;font-size:10px;letter-spacing:0.208px;">Application</div>
<svg class="abs" style="left:7.5px;top:77px;width:8px;height:5px" viewBox="0 0 8 5"><path d="M0.7 0.7 L4 4 L7.3 0.7" fill="none" stroke="#444" stroke-width="1.3"/></svg>
<svg class="abs" style="left:22.5px;top:72.5px;width:13px;height:14px" viewBox="0 0 13 14"><rect x="0.5" y="0.5" width="12" height="13" rx="1" fill="#fafafa" stroke="#bdbdbd" stroke-width="0.8"/><path d="M2.4 6.4 L6.4 4.6 L10 6 L10 10 L6 12 L2.4 10.4Z" fill="#3b63b0" stroke="#223f7a" stroke-width="0.5"/><path d="M2.4 6.4 L6.4 4.6 L10 6 L6 7.8Z" fill="#6d92d6"/><circle cx="8.4" cy="4.4" r="2.6" fill="#d82a2a"/></svg>
<div class="abs tx" style="left:41.00px;top:73.62px;font-size:10px;letter-spacing:-0.131px;font-weight:bold;">Tutorial</div>
<svg class="abs" style="left:38px;top:89.5px;width:14px;height:10.5px" viewBox="0 0 14 10.5"><rect x="0.6" y="0.6" width="12.8" height="9.3" fill="#fff" stroke="#111" stroke-width="1.2"/><path d="M0.6 3.7 H13.4 M0.6 6.8 H13.4 M4.9 0.6 V9.9 M9.1 0.6 V9.9" stroke="#111" stroke-width="1.1"/></svg>
<div class="abs tx" style="left:57.00px;top:88.62px;font-size:10px;letter-spacing:0.076px;">Dims</div>
<svg class="abs" style="left:38px;top:105.19999999999999px;width:14px;height:9px" viewBox="0 0 14 9"><path d="M5 0.8 L5 8.2 L0.8 4.5Z M9 0.8 L9 8.2 L13.2 4.5Z" fill="#fff" stroke="#777" stroke-width="0.9" stroke-linejoin="round"/><circle cx="7" cy="4.5" r="0.8" fill="#555"/></svg>
<div class="abs tx" style="left:57.00px;top:103.62px;font-size:10px;letter-spacing:0.210px;color:#9b9b9b;">Width</div>
<svg class="abs" style="left:38px;top:120.19999999999999px;width:14px;height:9px" viewBox="0 0 14 9"><path d="M5 0.8 L5 8.2 L0.8 4.5Z M9 0.8 L9 8.2 L13.2 4.5Z" fill="#fff" stroke="#777" stroke-width="0.9" stroke-linejoin="round"/><circle cx="7" cy="4.5" r="0.8" fill="#555"/></svg>
<div class="abs tx" style="left:57.00px;top:118.62px;font-size:10px;letter-spacing:0.219px;color:#9b9b9b;">Height</div>
<svg class="abs" style="left:38px;top:133.5px;width:14px;height:13px" viewBox="0 0 14 13"><circle cx="8.6" cy="4.8" r="4" fill="#fff" stroke="#cc1f1f" stroke-width="1.4"/><rect x="0.9" y="5.4" width="7.6" height="6.6" rx="0.8" fill="#fff" stroke="#cc1f1f" stroke-width="1.4"/><path d="M4.8 5.6 A4 4 0 0 0 8.5 8.8" fill="none" stroke="#cc1f1f" stroke-width="1.2"/></svg>
<div class="abs tx" style="left:57.00px;top:133.62px;font-size:10px;letter-spacing:-0.532px;">Sketch001</div>
<div class="abs" style="left:36px;top:147px;width:68px;height:14.8px;background:#d9d9d9"></div>
<svg class="abs" style="left:25.5px;top:151px;width:5px;height:8px" viewBox="0 0 5 8"><path d="M0.7 0.7 L4 4 L0.7 7.3" fill="none" stroke="#a0a0a0" stroke-width="1.1"/></svg>
<svg class="abs" style="left:39px;top:148px;width:12.6px;height:13px" viewBox="0 0 12.6 13"><rect x="0.5" y="0.5" width="2.7" height="5.4" fill="#4a7ebb" stroke="#244a7d" stroke-width="0.55"/><rect x="0.5" y="7" width="2.7" height="5.4" fill="#4a7ebb" stroke="#244a7d" stroke-width="0.55"/><rect x="4.8" y="0.5" width="2.7" height="5.4" fill="#4a7ebb" stroke="#244a7d" stroke-width="0.55"/><rect x="4.8" y="7" width="2.7" height="5.4" fill="#4a7ebb" stroke="#244a7d" stroke-width="0.55"/><rect x="9.1" y="0.5" width="2.7" height="5.4" fill="#4a7ebb" stroke="#244a7d" stroke-width="0.55"/><rect x="9.1" y="7" width="2.7" height="5.4" fill="#4a7ebb" stroke="#244a7d" stroke-width="0.55"/></svg>
<div class="abs tx" style="left:57.00px;top:148.62px;font-size:10px;letter-spacing:-0.282px;font-weight:bold;">Array</div>
<div class="abs" style="left:3px;top:222px;width:291px;height:183.5px;background:#fff;border:1px solid #adadad;box-sizing:border-box;overflow:hidden" id="prop">
<div class="abs tx" style="left:4.00px;top:4.12px;font-size:10px;letter-spacing:-0.113px;">Property</div><div class="abs tx" style="left:87.00px;top:4.12px;font-size:10px;letter-spacing:0.042px;">Value</div>
<div class="abs" style="left:83px;top:0;width:1px;height:200px;background:#e6e6e6"></div>
<div class="abs" style="left:17px;top:19.60px;width:257px;height:16.72px;background:#f5f5f5;border-top:1px solid #e6e6e6;box-sizing:border-box"></div>
<div class="abs tx" style="left:20.00px;top:22.82px;font-size:10px;letter-spacing:-0.202px;">Center</div>
<div class="abs tx" style="left:87.00px;top:22.82px;font-size:10px;letter-spacing:-0.091px;white-space:pre;">[0.00 mm  0.00 mm  0.00 mm]</div>
<svg class="abs" style="left:6.5px;top:24.20px;width:5px;height:8px" viewBox="0 0 5 8"><path d="M0.7 0.7 L4 4 L0.7 7.3" fill="none" stroke="#8c8c8c" stroke-width="1.1"/></svg>
<div class="abs" style="left:17px;top:36.32px;width:257px;height:16.72px;background:#fff;border-top:1px solid #e6e6e6;box-sizing:border-box"></div>
<div class="abs tx" style="left:20.00px;top:39.54px;font-size:10px;letter-spacing:-0.877px;">Fuse</div>
<div class="abs tx" style="left:87.00px;top:39.54px;font-size:10px;letter-spacing:-0.405px;white-space:pre;">false</div>
<div class="abs" style="left:17px;top:53.04px;width:257px;height:16.72px;background:#f5f5f5;border-top:1px solid #e6e6e6;box-sizing:border-box"></div>
<div class="abs tx" style="left:20.00px;top:56.26px;font-size:10px;letter-spacing:-0.159px;">Interval Axis</div>
<div class="abs tx" style="left:87.00px;top:56.26px;font-size:10px;letter-spacing:-0.091px;white-space:pre;">[0.00 mm  0.00 mm  0.00 mm]</div>
<svg class="abs" style="left:6.5px;top:57.64px;width:5px;height:8px" viewBox="0 0 5 8"><path d="M0.7 0.7 L4 4 L0.7 7.3" fill="none" stroke="#8c8c8c" stroke-width="1.1"/></svg>
<div class="abs" style="left:17px;top:69.76px;width:257px;height:16.72px;background:#fff;border-top:1px solid #e6e6e6;box-sizing:border-box"></div>
<div class="abs tx" style="left:20.00px;top:72.98px;font-size:10px;letter-spacing:-0.193px;">Interval X</div>
<div class="abs tx" style="left:87.00px;top:72.98px;font-size:10px;letter-spacing:-0.091px;white-space:pre;">[1.00 mm  0.00 mm  0.00 mm]</div>
<svg class="abs" style="left:5px;top:75.76px;width:8px;height:5px" viewBox="0 0 8 5"><path d="M0.7 0.7 L4 4 L7.3 0.7" fill="none" stroke="#333" stroke-width="1.3"/></svg>
<div class="abs" style="left:34px;top:86.48px;width:240px;height:16.72px;background:#f5f5f5;border-top:1px solid #e6e6e6;box-sizing:border-box"></div>
<div class="abs" style="left:34px;top:86.48px;width:49px;height:16.119999999999997px;background:#0b6fd0"></div>
<div class="abs" style="left:83px;top:86.48px;width:191px;height:16.72px;background:#fff"></div>
<div class="abs" style="left:86.5px;top:88.88px;width:17.5px;height:11.6px;background:#0b6fd0"></div>
<div class="abs tx" style="left:37.00px;top:89.70px;font-size:10px;letter-spacing:-0.400px;color:#fff;">x</div>
<div class="abs tx" style="left:87.40px;top:90.00px;font-size:10px;letter-spacing:-0.383px;white-space:pre;"><span style="color:#fff">1.00</span> mm</div>
<svg class="abs" style="left:248px;top:87.08px;width:12px;height:12px" viewBox="0 0 12 12"><circle cx="6" cy="6" r="5.3" fill="#cfe0f2" stroke="#5f86b6" stroke-width="0.9"/><path d="M3 9 C4.6 9 4.4 3 6 3 M3.6 5.6 H6 M6.4 5.4 L9 8.8 M9 5.4 L6.4 8.8" fill="none" stroke="#2f5f9a" stroke-width="0.9"/></svg>
<div class="abs" style="left:262.5px;top:87.68px;width:11px;height:7.4px;background:#f0f0f0;border:1px solid #adadad;box-sizing:border-box"></div><div class="abs" style="left:262.5px;top:94.88px;width:11px;height:7.4px;background:#f0f0f0;border:1px solid #adadad;box-sizing:border-box"></div>
<svg class="abs" style="left:265.5px;top:89.88px;width:5px;height:3px" viewBox="0 0 6 4"><path d="M0 4H6L3 0Z" fill="#111"/></svg><svg class="abs" style="left:265.5px;top:97.08px;width:5px;height:3px" viewBox="0 0 6 4"><path d="M0 0H6L3 4Z" fill="#111"/></svg>
<div class="abs" style="left:34px;top:103.20px;width:240px;height:16.72px;background:#fff;border-top:1px solid #e6e6e6;box-sizing:border-box"></div>
<div class="abs tx" style="left:37.00px;top:106.42px;font-size:10px;letter-spacing:-0.400px;">y</div>
<div class="abs tx" style="left:87.00px;top:106.42px;font-size:10px;letter-spacing:-0.316px;white-space:pre;">0.00 mm</div>
<div class="abs" style="left:34px;top:119.92px;width:240px;height:16.72px;background:#f5f5f5;border-top:1px solid #e6e6e6;box-sizing:border-box"></div>
<div class="abs tx" style="left:37.00px;top:123.14px;font-size:10px;letter-spacing:-0.800px;">z</div>
<div class="abs tx" style="left:87.00px;top:123.14px;font-size:10px;letter-spacing:-0.316px;white-space:pre;">0.00 mm</div>
<div class="abs" style="left:17px;top:136.64px;width:257px;height:16.72px;background:#fff;border-top:1px solid #e6e6e6;box-sizing:border-box"></div>
<div class="abs tx" style="left:20.00px;top:139.86px;font-size:10px;letter-spacing:-0.229px;">Interval Y</div>
<div class="abs tx" style="left:87.00px;top:139.86px;font-size:10px;letter-spacing:-0.091px;white-space:pre;">[0.00 mm  1.00 mm  0.00 mm]</div>
<svg class="abs" style="left:6.5px;top:141.24px;width:5px;height:8px" viewBox="0 0 5 8"><path d="M0.7 0.7 L4 4 L0.7 7.3" fill="none" stroke="#8c8c8c" stroke-width="1.1"/></svg>
<div class="abs" style="left:17px;top:153.36px;width:257px;height:16.72px;background:#f5f5f5;border-top:1px solid #e6e6e6;box-sizing:border-box"></div>
<div class="abs tx" style="left:20.00px;top:156.58px;font-size:10px;letter-spacing:-0.186px;">Interval Z</div>
<div class="abs tx" style="left:87.00px;top:156.58px;font-size:10px;letter-spacing:-0.091px;white-space:pre;">[0.00 mm  0.00 mm  0.00 mm]</div>
<svg class="abs" style="left:6.5px;top:157.96px;width:5px;height:8px" viewBox="0 0 5 8"><path d="M0.7 0.7 L4 4 L0.7 7.3" fill="none" stroke="#8c8c8c" stroke-width="1.1"/></svg>
<div class="abs" style="left:17px;top:170.08px;width:257px;height:16.72px;background:#fff;border-top:1px solid #e6e6e6;box-sizing:border-box"></div>
<div class="abs tx" style="left:20.00px;top:173.30px;font-size:10px;letter-spacing:-0.062px;">Number Polar</div>
<div class="abs tx" style="left:87.00px;top:173.30px;font-size:10px;letter-spacing:-2.161px;white-space:pre;">1</div>
<div class="abs" style="left:274.5px;top:0;width:16px;height:200px;background:#f0f0f0"></div>
<div class="abs" style="left:276.5px;top:85px;width:12px;height:57.5px;background:#cdcdcd"></div>
<svg class="abs" style="left:278.5px;top:4.5px;width:8px;height:5px" viewBox="0 0 8 5"><path d="M0.7 4.3 L4 1 L7.3 4.3" fill="none" stroke="#444" stroke-width="1.3"/></svg>
<svg class="abs" style="left:278.5px;top:171.5px;width:8px;height:5px" viewBox="0 0 8 5"><path d="M0.7 0.7 L4 4 L7.3 0.7" fill="none" stroke="#444" stroke-width="1.3"/></svg>
</div>
<div class="abs" style="left:2px;top:406px;width:296px;height:15.5px;background:#fcfcfc"></div>
<svg class="abs" style="left:0px;top:404px;width:90px;height:19px" viewBox="0 0 90 19">
<path d="M2.4 2 C3.2 10 4.4 14.6 8.4 14.6 L33 14.6 C36.6 14.6 37.2 8 39.2 2Z" fill="#e9e9e9" stroke="#444" stroke-width="0.9"/>
<path d="M39.2 2 C41 5 41.4 15.8 46.6 15.8 L72 15.8 C76 15.8 76.8 8 78.8 2Z" fill="#fff" stroke="#333" stroke-width="0.9"/>
<path d="M39.8 2 H78.2" stroke="#fff" stroke-width="1.8"/></svg>
<div class="abs tx" style="left:12.00px;top:407.12px;font-size:10px;letter-spacing:-1.365px;">View</div>
<div class="abs tx" style="left:49.60px;top:408.12px;font-size:10px;letter-spacing:-0.507px;">Data</div>
</div>
<div id="view3d" class="abs">
<svg class="abs" style="left:0;top:0;width:495.6px;height:403px" viewBox="304.4 122 495.6 403">
<defs><linearGradient id="fade" gradientUnits="userSpaceOnUse" x1="0" y1="128" x2="0" y2="526"><stop offset="0" stop-color="#1e1e46" stop-opacity="0"/><stop offset="0.22" stop-color="#1e1e46" stop-opacity="0.18"/><stop offset="0.45" stop-color="#1e1e46" stop-opacity="0.3"/><stop offset="1" stop-color="#1e1e46" stop-opacity="0.52"/></linearGradient></defs>
<path d="M308.60 128 V526 M319.70 128 V526 M330.80 128 V526 M341.90 128 V526 M364.10 128 V526 M375.20 128 V526 M386.30 128 V526 M397.40 128 V526 M408.50 128 V526 M419.60 128 V526 M430.70 128 V526 M441.80 128 V526 M452.90 128 V526 M475.10 128 V526 M486.20 128 V526 M497.30 128 V526 M508.40 128 V526 M519.50 128 V526 M530.60 128 V526 M541.70 128 V526 M552.80 128 V526 M563.90 128 V526 M586.10 128 V526 M597.20 128 V526 M608.30 128 V526 M619.40 128 V526 M630.50 128 V526 M641.60 128 V526 M652.70 128 V526 M663.80 128 V526 M674.90 128 V526 M697.10 128 V526 M708.20 128 V526 M719.30 128 V526 M730.40 128 V526 M741.50 128 V526 M752.60 128 V526 M763.70 128 V526 M774.80 128 V526 M785.90 128 V526" stroke="url(#fade)" stroke-width="0.9" fill="none"/>
<path d="M353.00 121 V526 M464.00 121 V526 M575.00 121 V526 M686.00 121 V526 M797.00 121 V526" stroke="#1e1e46" stroke-width="1" opacity="0.6" fill="none"/>
<path d="M304.4 204.60 H800" stroke="#1e1e46" stroke-width="0.9" opacity="0.240" fill="none"/>
<path d="M304.4 215.75 H800" stroke="#1e1e46" stroke-width="0.9" opacity="0.181" fill="none"/>
<path d="M304.4 226.90 H800" stroke="#1e1e46" stroke-width="0.9" opacity="0.192" fill="none"/>
<path d="M304.4 238.05 H800" stroke="#1e1e46" stroke-width="0.9" opacity="0.204" fill="none"/>
<path d="M304.4 249.20 H800" stroke="#1e1e46" stroke-width="0.9" opacity="0.216" fill="none"/>
<path d="M304.4 260.35 H800" stroke="#1e1e46" stroke-width="0.9" opacity="0.228" fill="none"/>
<path d="M304.4 271.50 H800" stroke="#1e1e46" stroke-width="0.9" opacity="0.239" fill="none"/>
<path d="M304.4 282.65 H800" stroke="#1e1e46" stroke-width="0.9" opacity="0.251" fill="none"/>
<path d="M304.4 293.80 H800" stroke="#1e1e46" stroke-width="0.9" opacity="0.263" fill="none"/>
<path d="M304.4 304.95 H800" stroke="#1e1e46" stroke-width="0.9" opacity="0.274" fill="none"/>
<path d="M304.4 316.10 H800" stroke="#1e1e46" stroke-width="1" opacity="0.6" fill="none"/>
<path d="M304.4 327.25 H800" stroke="#1e1e46" stroke-width="0.9" opacity="0.298" fill="none"/>
<path d="M304.4 338.40 H800" stroke="#1e1e46" stroke-width="0.9" opacity="0.310" fill="none"/>
<path d="M304.4 349.55 H800" stroke="#1e1e46" stroke-width="0.9" opacity="0.321" fill="none"/>
<path d="M304.4 360.70 H800" stroke="#1e1e46" stroke-width="0.9" opacity="0.333" fill="none"/>
<path d="M304.4 371.85 H800" stroke="#1e1e46" stroke-width="0.9" opacity="0.345" fill="none"/>
<path d="M304.4 383.00 H800" stroke="#1e1e46" stroke-width="0.9" opacity="0.356" fill="none"/>
<path d="M304.4 394.15 H800" stroke="#1e1e46" stroke-width="0.9" opacity="0.368" fill="none"/>
<path d="M304.4 405.30 H800" stroke="#1e1e46" stroke-width="0.9" opacity="0.380" fill="none"/>
<path d="M304.4 416.45 H800" stroke="#1e1e46" stroke-width="0.9" opacity="0.392" fill="none"/>
<path d="M304.4 427.60 H800" stroke="#1e1e46" stroke-width="1" opacity="0.6" fill="none"/>
<path d="M304.4 438.75 H800" stroke="#1e1e46" stroke-width="0.9" opacity="0.415" fill="none"/>
<path d="M304.4 449.90 H800" stroke="#1e1e46" stroke-width="0.9" opacity="0.427" fill="none"/>
<path d="M304.4 461.05 H800" stroke="#1e1e46" stroke-width="0.9" opacity="0.438" fill="none"/>
<path d="M304.4 472.20 H800" stroke="#1e1e46" stroke-width="0.9" opacity="0.450" fill="none"/>
<path d="M304.4 483.35 H800" stroke="#1e1e46" stroke-width="0.9" opacity="0.462" fill="none"/>
<path d="M304.4 494.50 H800" stroke="#1e1e46" stroke-width="0.9" opacity="0.473" fill="none"/>
<path d="M304.4 505.65 H800" stroke="#1e1e46" stroke-width="0.9" opacity="0.485" fill="none"/>
<path d="M304.4 516.80 H800" stroke="#1e1e46" stroke-width="0.9" opacity="0.497" fill="none"/>
<path d="M671.6 324.5 V360" stroke="#fff" stroke-width="1.5"/>
<polygon points="575.0,304.6 597.4,265.6 642.1,265.6 664.4,304.6 642.1,343.6 597.4,343.6" fill="#f0fff0" stroke="none"/><polygon points="586.4,304.6 608.8,265.6 653.5,265.6 675.8,304.6 653.5,343.6 608.8,343.6" fill="#f0fff0" stroke="none"/><polygon points="575.0,316.4 597.4,277.4 642.1,277.4 664.4,316.4 642.1,355.4 597.4,355.4" fill="#f0fff0" stroke="none"/><polygon points="586.4,316.4 608.8,277.4 653.5,277.4 675.8,316.4 653.5,355.4 608.8,355.4" fill="#f0fff0" stroke="none"/><polygon points="575.0,304.6 597.4,265.6 642.1,265.6 664.4,304.6 642.1,343.6 597.4,343.6" fill="none" stroke="#1fa81f" stroke-width="1.55" stroke-linejoin="round"/><polygon points="586.4,304.6 608.8,265.6 653.5,265.6 675.8,304.6 653.5,343.6 608.8,343.6" fill="none" stroke="#1fa81f" stroke-width="1.55" stroke-linejoin="round"/><polygon points="575.0,316.4 597.4,277.4 642.1,277.4 664.4,316.4 642.1,355.4 597.4,355.4" fill="none" stroke="#1fa81f" stroke-width="1.55" stroke-linejoin="round"/><polygon points="586.4,316.4 608.8,277.4 653.5,277.4 675.8,316.4 653.5,355.4 608.8,355.4" fill="none" stroke="#1fa81f" stroke-width="1.55" stroke-linejoin="round"/><circle cx="575.0" cy="304.6" r="1.5" fill="#3fcf3f"/><circle cx="597.4" cy="265.6" r="1.5" fill="#3fcf3f"/><circle cx="642.1" cy="265.6" r="1.5" fill="#3fcf3f"/><circle cx="664.4" cy="304.6" r="1.5" fill="#3fcf3f"/><circle cx="642.1" cy="343.6" r="1.5" fill="#3fcf3f"/><circle cx="597.4" cy="343.6" r="1.5" fill="#3fcf3f"/><circle cx="586.4" cy="304.6" r="1.5" fill="#3fcf3f"/><circle cx="608.8" cy="265.6" r="1.5" fill="#3fcf3f"/><circle cx="653.5" cy="265.6" r="1.5" fill="#3fcf3f"/><circle cx="675.8" cy="304.6" r="1.5" fill="#3fcf3f"/><circle cx="653.5" cy="343.6" r="1.5" fill="#3fcf3f"/><circle cx="608.8" cy="343.6" r="1.5" fill="#3fcf3f"/><circle cx="575.0" cy="316.4" r="1.5" fill="#3fcf3f"/><circle cx="597.4" cy="277.4" r="1.5" fill="#3fcf3f"/><circle cx="642.1" cy="277.4" r="1.5" fill="#3fcf3f"/><circle cx="664.4" cy="316.4" r="1.5" fill="#3fcf3f"/><circle cx="642.1" cy="355.4" r="1.5" fill="#3fcf3f"/><circle cx="597.4" cy="355.4" r="1.5" fill="#3fcf3f"/><circle cx="586.4" cy="316.4" r="1.5" fill="#3fcf3f"/><circle cx="608.8" cy="277.4" r="1.5" fill="#3fcf3f"/><circle cx="653.5" cy="277.4" r="1.5" fill="#3fcf3f"/><circle cx="675.8" cy="316.4" r="1.5" fill="#3fcf3f"/><circle cx="653.5" cy="355.4" r="1.5" fill="#3fcf3f"/><circle cx="608.8" cy="355.4" r="1.5" fill="#3fcf3f"/>
<polygon points="670.6,360.4 693.0,321.4 737.7,321.4 760.0,360.4 737.7,399.4 693.0,399.4" fill="#f0fff0" stroke="none"/><polygon points="682.0,360.4 704.4,321.4 749.1,321.4 771.4,360.4 749.1,399.4 704.4,399.4" fill="#f0fff0" stroke="none"/><polygon points="670.6,372.2 693.0,333.2 737.7,333.2 760.0,372.2 737.7,411.2 693.0,411.2" fill="#f0fff0" stroke="none"/><polygon points="682.0,372.2 704.4,333.2 749.1,333.2 771.4,372.2 749.1,411.2 704.4,411.2" fill="#f0fff0" stroke="none"/><polygon points="670.6,360.4 693.0,321.4 737.7,321.4 760.0,360.4 737.7,399.4 693.0,399.4" fill="none" stroke="#1fa81f" stroke-width="1.55" stroke-linejoin="round"/><polygon points="682.0,360.4 704.4,321.4 749.1,321.4 771.4,360.4 749.1,399.4 704.4,399.4" fill="none" stroke="#1fa81f" stroke-width="1.55" stroke-linejoin="round"/><polygon points="670.6,372.2 693.0,333.2 737.7,333.2 760.0,372.2 737.7,411.2 693.0,411.2" fill="none" stroke="#1fa81f" stroke-width="1.55" stroke-linejoin="round"/><polygon points="682.0,372.2 704.4,333.2 749.1,333.2 771.4,372.2 749.1,411.2 704.4,411.2" fill="none" stroke="#1fa81f" stroke-width="1.55" stroke-linejoin="round"/><circle cx="670.6" cy="360.4" r="1.5" fill="#3fcf3f"/><circle cx="693.0" cy="321.4" r="1.5" fill="#3fcf3f"/><circle cx="737.7" cy="321.4" r="1.5" fill="#3fcf3f"/><circle cx="760.0" cy="360.4" r="1.5" fill="#3fcf3f"/><circle cx="737.7" cy="399.4" r="1.5" fill="#3fcf3f"/><circle cx="693.0" cy="399.4" r="1.5" fill="#3fcf3f"/><circle cx="682.0" cy="360.4" r="1.5" fill="#3fcf3f"/><circle cx="704.4" cy="321.4" r="1.5" fill="#3fcf3f"/><circle cx="749.1" cy="321.4" r="1.5" fill="#3fcf3f"/><circle cx="771.4" cy="360.4" r="1.5" fill="#3fcf3f"/><circle cx="749.1" cy="399.4" r="1.5" fill="#3fcf3f"/><circle cx="704.4" cy="399.4" r="1.5" fill="#3fcf3f"/><circle cx="670.6" cy="372.2" r="1.5" fill="#3fcf3f"/><circle cx="693.0" cy="333.2" r="1.5" fill="#3fcf3f"/><circle cx="737.7" cy="333.2" r="1.5" fill="#3fcf3f"/><circle cx="760.0" cy="372.2" r="1.5" fill="#3fcf3f"/><circle cx="737.7" cy="411.2" r="1.5" fill="#3fcf3f"/><circle cx="693.0" cy="411.2" r="1.5" fill="#3fcf3f"/><circle cx="682.0" cy="372.2" r="1.5" fill="#3fcf3f"/><circle cx="704.4" cy="333.2" r="1.5" fill="#3fcf3f"/><circle cx="749.1" cy="333.2" r="1.5" fill="#3fcf3f"/><circle cx="771.4" cy="372.2" r="1.5" fill="#3fcf3f"/><circle cx="749.1" cy="411.2" r="1.5" fill="#3fcf3f"/><circle cx="704.4" cy="411.2" r="1.5" fill="#3fcf3f"/>
</svg>
</div>
<div id="mditabs" class="abs">
<div class="abs" style="left:3px;top:0.5px;width:92px;height:17px;background:#f1f1f1;border-bottom:1px solid #d0d0d0;box-sizing:border-box"></div>
<div class="abs" style="left:199px;top:0.5px;width:74px;height:17.5px;background:#f1f1f1;border-bottom:1px solid #d0d0d0;box-sizing:border-box"></div>
<div class="abs" style="left:95px;top:0px;width:103.5px;height:18.5px;background:#fff"></div>
<svg class="abs" style="left:10.600000000000023px;top:2.2000000000000455px;width:12.8px;height:12.8px" viewBox="0 0 12 12"><circle cx="6" cy="6" r="5.4" fill="#2f7fd6" stroke="#1b4f94" stroke-width="0.9"/><path d="M3 3.4 C4.4 1.8 7.6 1.6 9 3.2 C8 4.8 6.4 4 5.4 5.4 C4.6 6.6 3 6 2.2 5 Z" fill="#e9f3ff"/><path d="M5 8.4 C6.4 7.4 8.4 7.8 9.6 7 C9 9.4 7 10.6 5.2 10.2Z" fill="#bcd9f6"/></svg>
<div class="abs tx" style="left:26.00px;top:2.72px;font-size:10px;letter-spacing:-0.349px;">Start page</div>
<svg class="abs" style="left:73.30000000000001px;top:3.7999999999999545px;width:11.4px;height:11.4px" viewBox="0 0 12.5 12.5"><rect x="0.5" y="0.5" width="11.5" height="11.5" rx="1.8" fill="#cbcbcb" stroke="#b4b4b4" stroke-width="0.8"/><path d="M3.8 3.8 L8.7 8.7 M8.7 3.8 L3.8 8.7" stroke="#fff" stroke-width="1.6" stroke-linecap="round"/></svg>
<svg class="abs" style="left:106.5px;top:2px;width:13px;height:13px" viewBox="0 0 24 24"><defs><linearGradient id="fgb" x1="0" y1="0" x2="0" y2="1"><stop offset="0" stop-color="#d42020"/><stop offset="1" stop-color="#b01414"/></linearGradient></defs><path d="M1 1 H13 V5.5 H6.4 V9 H11 V13.5 H6.4 V21 H1Z" fill="url(#fgb)" stroke="#8e0f0f" stroke-width="0.6"/><g transform="translate(15.2 15.6)"><path d="M0 -8 L2 -5.8 L4.9 -6.4 L5.2 -3.4 L7.9 -2 L6.4 0.6 L7.6 3.4 L4.9 4.6 L4.3 7.6 L1.3 6.9 L-1 9 L-3 6.6 L-6 6.9 L-6.2 3.9 L-8.8 2.2 L-7.2 -0.4 L-8.2 -3.3 L-5.4 -4.4 L-4.6 -7.3 L-1.6 -6.5Z" fill="#2a56ad" stroke="#16336c" stroke-width="0.9"/><circle r="2.6" fill="#dfe6f5" stroke="#16336c" stroke-width="0.6"/></g></svg>
<div class="abs tx" style="left:123.00px;top:2.91px;font-size:10px;letter-spacing:-0.313px;">Tutorial : 1*</div>
<svg class="abs" style="left:173.8px;top:3.2000000000000455px;width:12.2px;height:12.2px" viewBox="0 0 12.5 12.5"><rect x="0.5" y="0.5" width="11.5" height="11.5" rx="1.8" fill="#e2623d" stroke="#c4472a" stroke-width="0.8"/><path d="M3.6 3.6 L8.9 8.9 M8.9 3.6 L3.6 8.9" stroke="#fff" stroke-width="1.7" stroke-linecap="round"/></svg>
<svg class="abs" style="left:208px;top:3.5px;width:12px;height:9.5px" viewBox="0 0 12 9.5"><rect x="0.5" y="0.5" width="11" height="8.5" fill="#fff" stroke="#111" stroke-width="1"/><path d="M0.5 3.3 H11.5 M0.5 6.1 H11.5 M4 0.5 V9" stroke="#111" stroke-width="0.9"/></svg>
<div class="abs tx" style="left:224.00px;top:2.72px;font-size:10px;letter-spacing:-0.791px;">Dims*</div>
<svg class="abs" style="left:251.29999999999995px;top:3.7999999999999545px;width:11.4px;height:11.4px" viewBox="0 0 12.5 12.5"><rect x="0.5" y="0.5" width="11.5" height="11.5" rx="1.8" fill="#cbcbcb" stroke="#b4b4b4" stroke-width="0.8"/><path d="M3.8 3.8 L8.7 8.7 M8.7 3.8 L3.8 8.7" stroke="#fff" stroke-width="1.6" stroke-linecap="round"/></svg>
</div>
<div id="taskbar" class="abs">
<div class="abs" style="left:0;top:0;width:800px;height:34px;background:linear-gradient(90deg,#221b16 0%,#241c17 35%,#2a2019 44%,#3a2d22 49%,#3e3125 60%,#3b2e23 70%,#46382b 85%,#3f3226 100%)"></div>
<div class="abs" style="left:396px;top:12px;width:108px;height:26px;background:#261e18;opacity:.8;filter:blur(3px)"></div>
<div class="abs" style="left:636px;top:-4px;width:10px;height:42px;background:#2a2019;opacity:.6;filter:blur(3px)"></div>
<div class="abs" style="left:520px;top:-4px;width:14px;height:42px;background:#30261d;opacity:.5;filter:blur(4px)"></div>
<div class="abs" style="left:700px;top:-4px;width:50px;height:42px;background:#4d3e30;opacity:.45;filter:blur(6px)"></div>
<div class="abs" style="left:0;top:0;width:800px;height:1px;background:#1a1511;opacity:.8"></div>
<svg class="abs" style="left:13px;top:10px;width:14.5px;height:14.5px" viewBox="0 0 15 15"><path d="M0 2.2 L6.4 1.3 V7 H0Z M7.4 1.1 L15 0 V7 H7.4Z M0 8 H6.4 V13.7 L0 12.8Z M7.4 8 H15 V15 L7.4 13.9Z" fill="#f3f3f3"/></svg>
<svg class="abs" style="left:51px;top:10.5px;width:19px;height:13px" viewBox="0 0 19 13"><rect x="4.2" y="0.8" width="10.6" height="11.4" fill="none" stroke="#f3f3f3" stroke-width="1.4"/><path d="M2.6 2.4 H1 V10.6 H2.6 M16.4 2.4 H18 V10.6 H16.4" fill="none" stroke="#f3f3f3" stroke-width="1.2"/></svg>
<svg class="abs" style="left:93px;top:6.5px;width:20px;height:21px" viewBox="0 0 20 21"><path d="M6 7.4 C6 0.6 13.4 0.2 13.6 6.2" fill="none" stroke="#f3f3f3" stroke-width="1.5"/><path d="M1 7.6 L19 5 L19 20.6 L1 18.2Z" fill="#f6f6f6"/><path d="M4.4 9.8 L9 9.2 V12.8 L4.4 13Z M10.2 9 L15.8 8.2 V12.6 L10.2 12.8Z M4.4 14 L9 14 V17.4 L4.4 16.8Z M10.2 14 L15.8 14 V18.4 L10.2 17.6Z" fill="#2a211b"/></svg>
<svg class="abs" style="left:134.5px;top:7.5px;width:18.5px;height:19px" viewBox="0 0 18.5 19"><path d="M1 8 V15.6 Q1 18 3.4 18 H15.1 Q17.5 18 17.5 15.6 V8" fill="none" stroke="#c29a25" stroke-width="1.6"/><rect x="1.6" y="0.8" width="15.3" height="16.2" rx="2" fill="#35183f"/><path d="M6 2.4 V14.4 M9.2 1.8 V15 M12.4 2.4 V14.4" stroke="#5e3a78" stroke-width="2"/><path d="M4 15.4 H14.6" stroke="#7a5a2a" stroke-width="0.8"/></svg>
<svg class="abs" style="left:175.5px;top:8px;width:19.5px;height:19.5px" viewBox="-10 -10 20 20"><circle r="9.6" fill="#dd4b3e"/><path d="M0 0 L-8.3 -4.8 A9.6 9.6 0 0 0 -4.8 8.3 Z M0 0 L-4.8 8.3 A9.6 9.6 0 0 0 0.2 9.6 L4 2.2Z" fill="#1fa463"/><path d="M0 0 L4.2 2.4 L0.2 9.6 A9.6 9.6 0 0 0 9.3 -2.4 L0 -2.4Z" fill="#fdd04a"/><circle r="4.5" fill="#f4f4f4"/><circle r="3.5" fill="#4688f1"/></svg>
<div class="abs" style="left:168px;top:31.799999999999955px;width:34px;height:2.2px;background:#a9a29b"></div>
<svg class="abs" style="left:216.5px;top:8.5px;width:20px;height:17px" viewBox="0 0 20 17"><path d="M0.5 2 H7 L8.6 3.8 H19.5 V16.5 H0.5Z" fill="#f3d56b"/><path d="M0.5 5.2 H19.5 V16.5 H0.5Z" fill="#f7dd80"/><path d="M3.5 9 H16.5 V16.5 H13.4 V12.6 H6.6 V16.5 H3.5Z" fill="#53b4e8"/></svg>
<div class="abs" style="left:258px;top:7.5px;width:20px;height:20px;background:#c01414;border:1px solid #d94040;box-sizing:border-box"></div><div class="abs" style="left:258px;top:9.5px;width:20px;text-align:center;color:#fff;font-weight:bold;font-size:15px;line-height:16px">M</div>
<div class="abs" style="left:288px;top:0;width:40px;height:34px;background:#5b514a"></div><div class="abs" style="left:288px;top:31.799999999999955px;width:40px;height:2.2px;background:#b7b0aa"></div>
<svg class="abs" style="left:297.5px;top:7px;width:22.5px;height:22.5px" viewBox="0 0 24 24"><defs><linearGradient id="fgc" x1="0" y1="0" x2="0" y2="1"><stop offset="0" stop-color="#f0501e"/><stop offset="1" stop-color="#b01414"/></linearGradient></defs><path d="M1 1 H13 V5.5 H6.4 V9 H11 V13.5 H6.4 V21 H1Z" fill="url(#fgc)" stroke="#8e0f0f" stroke-width="0.6"/><g transform="translate(15.2 15.6)"><path d="M0 -8 L2 -5.8 L4.9 -6.4 L5.2 -3.4 L7.9 -2 L6.4 0.6 L7.6 3.4 L4.9 4.6 L4.3 7.6 L1.3 6.9 L-1 9 L-3 6.6 L-6 6.9 L-6.2 3.9 L-8.8 2.2 L-7.2 -0.4 L-8.2 -3.3 L-5.4 -4.4 L-4.6 -7.3 L-1.6 -6.5Z" fill="#2a56ad" stroke="#16336c" stroke-width="0.9"/><circle r="2.6" fill="#4a5878" stroke="#16336c" stroke-width="0.6"/></g></svg>
<svg class="abs" style="left:339px;top:7.5px;width:20px;height:19px" viewBox="0 0 20 19"><rect x="8" y="2" width="11.5" height="15" fill="#f2f2f2"/><path d="M11 4.6 H18 M11 7 H18 M11 9.4 H18 M11 11.8 H18 M11 14.2 H18" stroke="#2f5fae" stroke-width="1.1"/><path d="M0.5 2 L11.6 0.2 V18.8 L0.5 17Z" fill="#2b5bb0"/><path d="M2.4 6 L4 13 L6 7.6 L8 13 L9.6 6" fill="none" stroke="#fff" stroke-width="1.4"/></svg>
<div class="abs" style="left:332px;top:31.799999999999955px;width:38px;height:2.2px;background:#a9a29b"></div>
</div>
</body>
</html>
